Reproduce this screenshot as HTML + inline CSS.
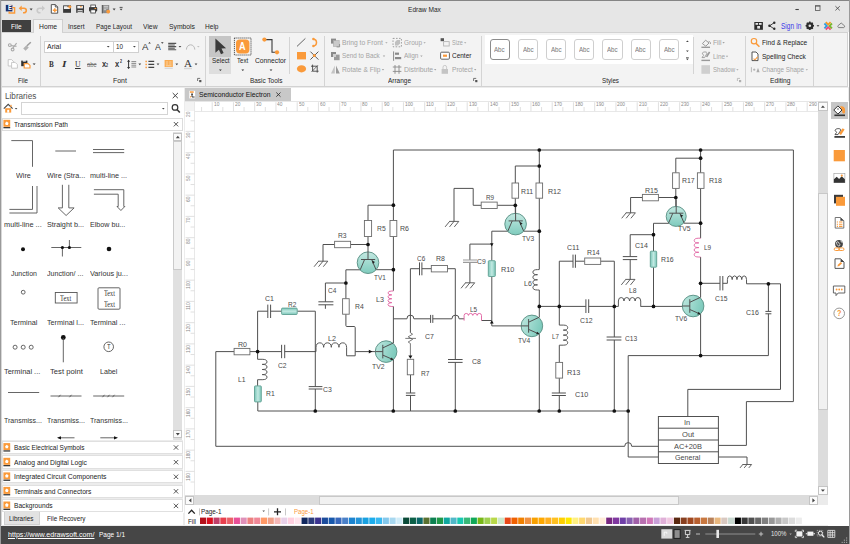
<!DOCTYPE html>
<html lang="en">
<head>
<meta charset="utf-8">
<title>Edraw Max</title>
<style>
*{box-sizing:border-box;margin:0;padding:0}
html,body{width:850px;height:544px;overflow:hidden;background:#fff}
body{font-family:"Liberation Sans",sans-serif;font-size:8px;color:#262626;position:relative}
#win{position:absolute;left:0;top:0;width:850px;height:544px;overflow:hidden;background:#e6e6e6}
.b{position:absolute}
.t{position:absolute;white-space:nowrap;transform-origin:0 50%}
svg.l{position:absolute;left:0;top:0;width:850px;height:544px;overflow:hidden}
.edge{position:absolute;background:#9a9a9a}
</style>
</head>
<body>
<div id="win">
<!-- panel backgrounds -->
<div class="b" style="left:0px;top:87px;width:850px;height:457px;background:#ececec;"></div>
<div class="b" style="left:2px;top:88px;width:182px;height:424.5px;background:#fff;"></div>
<div class="b" style="left:20.7px;top:102px;width:147.8px;height:12.7px;background:#fff;border:1px solid #d4d4d4;"></div>
<div class="b" style="left:2px;top:117.8px;width:180.5px;height:13px;background:#fff;border:1px solid #dcdcdc;"></div>
<div class="b" style="left:173.2px;top:132.4px;width:9.2px;height:308px;background:#e0e0e0;"></div>
<div class="b" style="left:173.2px;top:132.6px;width:9.2px;height:8.6px;background:#fbfbfb;border:1px solid #c4c4c4;"></div>
<div class="b" style="left:173.2px;top:141.2px;width:9.2px;height:129.2px;background:#f2f2f2;border:1px solid #cacaca;"></div>
<div class="b" style="left:173.2px;top:430px;width:9.2px;height:8.4px;background:#fbfbfb;border:1px solid #c4c4c4;"></div>
<div class="b" style="left:2px;top:440.4px;width:181px;height:72px;background:#ececec;"></div>
<div class="b" style="left:2px;top:440.7px;width:180.5px;height:13.4px;background:#fff;border:1px solid #e0e0e0;"></div>
<div class="b" style="left:2px;top:455.4px;width:180.5px;height:13.4px;background:#fff;border:1px solid #e0e0e0;"></div>
<div class="b" style="left:2px;top:470.0px;width:180.5px;height:13.4px;background:#fff;border:1px solid #e0e0e0;"></div>
<div class="b" style="left:2px;top:484.5px;width:180.5px;height:13.4px;background:#fff;border:1px solid #e0e0e0;"></div>
<div class="b" style="left:2px;top:499.1px;width:180.5px;height:13.4px;background:#fff;border:1px solid #e0e0e0;"></div>
<div class="b" style="left:2px;top:512.4px;width:181px;height:13px;background:#fff;"></div>
<div class="b" style="left:3.5px;top:512.4px;width:36.8px;height:12.4px;background:#e2e2e2;border:1px solid #d0d0d0;border-top:none;"></div>
<div class="b" style="left:185.2px;top:88px;width:663px;height:13.2px;background:#fff;"></div>
<div class="b" style="left:185.2px;top:88.2px;width:105.4px;height:12.8px;background:#c8c8c8;"></div>
<div class="b" style="left:185.2px;top:101px;width:633px;height:393.8px;background:#fff;"></div>
<div class="b" style="left:185.2px;top:101px;width:633px;height:11px;background:#fff;border-bottom:1px solid #e8e8e8;"></div>
<div class="b" style="left:185.2px;top:101px;width:9.7px;height:393.8px;background:#fff;border-right:1px solid #e8e8e8;"></div>
<div class="b" style="left:185.2px;top:101px;width:9px;height:10px;background:#f3f3f3;"></div>
<div class="b" style="left:185.2px;top:101px;width:633px;height:1px;background:#e6e6e6;"></div>
<div class="b" style="left:818.2px;top:101.4px;width:9.4px;height:393.4px;background:#dcdcdc;"></div>
<div class="b" style="left:818.2px;top:101.6px;width:9.4px;height:9.8px;background:#fbfbfb;border:1px solid #c4c4c4;"></div>
<div class="b" style="left:818.2px;top:193px;width:9.4px;height:217px;background:#f1f1f1;border:1px solid #c8c8c8;"></div>
<div class="b" style="left:818.2px;top:486.2px;width:9.4px;height:8.6px;background:#fbfbfb;border:1px solid #c4c4c4;"></div>
<div class="b" style="left:185.2px;top:495.4px;width:642.4px;height:9.6px;background:#dcdcdc;"></div>
<div class="b" style="left:185.4px;top:495.8px;width:9px;height:9px;background:#fbfbfb;border:1px solid #c4c4c4;"></div>
<div class="b" style="left:319.2px;top:495.8px;width:360.2px;height:9px;background:#f1f1f1;border:1px solid #c8c8c8;"></div>
<div class="b" style="left:809.3px;top:495.8px;width:8.6px;height:9px;background:#fbfbfb;border:1px solid #c4c4c4;"></div>
<div class="b" style="left:818.4px;top:495.4px;width:9.2px;height:9.6px;background:#ebebeb;"></div>
<div class="b" style="left:185.2px;top:505.2px;width:642.6px;height:20.2px;background:#fff;"></div>
<div class="b" style="left:828px;top:101px;width:21px;height:424.5px;background:#fff;"></div>
<div class="b" style="left:831px;top:101.8px;width:16.5px;height:16.8px;background:#c6c6c6;"></div>
<div class="b" style="left:0px;top:525.5px;width:850px;height:18.5px;background:#464646;"></div>
<!-- title + ribbon backgrounds -->
<div class="b" style="left:0px;top:0px;width:850px;height:33px;background:#e6e6e6;"></div>
<div class="b" style="left:2px;top:19.6px;width:29px;height:13px;background:#404040;"></div>
<div class="b" style="left:32.5px;top:19px;width:30.5px;height:15px;background:#f3f3f3;border:1px solid #cfcfcf;border-bottom:none;"></div>
<div class="b" style="left:1px;top:32px;width:846.5px;height:55px;background:#f3f3f3;border:1px solid #d2d2d2;border-left:none;"></div>
<div class="b" style="left:33.5px;top:32px;width:28.5px;height:1px;background:#f3f3f3;"></div>
<div class="b" style="left:847.5px;top:32px;width:2.5px;height:55px;background:#fff;"></div>
<div class="b" style="left:39.9px;top:36px;width:1px;height:50px;background:#d4d4d4;"></div>
<div class="b" style="left:205.1px;top:36px;width:1px;height:50px;background:#d4d4d4;"></div>
<div class="b" style="left:323.9px;top:36px;width:1px;height:50px;background:#d4d4d4;"></div>
<div class="b" style="left:481.2px;top:36px;width:1px;height:50px;background:#d4d4d4;"></div>
<div class="b" style="left:744.5px;top:36px;width:1px;height:50px;background:#d4d4d4;"></div>
<div class="b" style="left:813.2px;top:36px;width:1px;height:50px;background:#d4d4d4;"></div>
<div class="b" style="left:288.7px;top:37px;width:1px;height:37px;background:#d4d4d4;"></div>
<div class="b" style="left:693.3px;top:37px;width:1px;height:37px;background:#d4d4d4;"></div>
<div class="b" style="left:44.2px;top:40.5px;width:70px;height:12.2px;background:#fff;border:1px solid #d0d0d0;"></div>
<div class="b" style="left:113.2px;top:40.5px;width:25.8px;height:12.2px;background:#fff;border:1px solid #d0d0d0;"></div>
<div class="b" style="left:209.3px;top:35.6px;width:22px;height:21.2px;background:#c6c6c6;"></div>
<div class="b" style="left:209.3px;top:56.8px;width:22px;height:17px;background:#dedede;"></div>
<div class="b" style="left:485.2px;top:35px;width:208px;height:28.8px;background:#fff;"></div>
<div class="b" style="left:489.5px;top:39.2px;width:20.4px;height:20.5px;background:#fff;border:1px solid #8c8c8c;border-radius:3px;"></div>
<div class="b" style="left:517.7px;top:39.2px;width:20.4px;height:20.5px;background:#fff;border:1px solid #cfcfcf;border-radius:3px;"></div>
<div class="b" style="left:545.9px;top:39.2px;width:20.4px;height:20.5px;background:#fff;border:1px solid #cfcfcf;border-radius:3px;"></div>
<div class="b" style="left:574.1px;top:39.2px;width:20.4px;height:20.5px;background:#fff;border:1px solid #cfcfcf;border-radius:3px;"></div>
<div class="b" style="left:602.3px;top:39.2px;width:20.4px;height:20.5px;background:#fff;border:1px solid #cfcfcf;border-radius:3px;"></div>
<div class="b" style="left:630.5px;top:39.2px;width:20.4px;height:20.5px;background:#fff;border:1px solid #cfcfcf;border-radius:3px;"></div>
<div class="b" style="left:658.7px;top:39.2px;width:20.4px;height:20.5px;background:#fff;border:1px solid #cfcfcf;border-radius:3px;"></div>
<!-- circuit drawing -->
<svg class="l" viewBox="0 0 850 544"><defs><linearGradient id="tealv" x1="0" y1="0" x2="0" y2="1"><stop offset="0" stop-color="#c4e9e2"/><stop offset="1" stop-color="#7fcbbd"/></linearGradient><linearGradient id="tealh" x1="0" y1="0" x2="1" y2="0.3"><stop offset="0" stop-color="#c0e8e0"/><stop offset="1" stop-color="#7fcbbd"/></linearGradient><linearGradient id="tealrv" x1="0" y1="0" x2="1" y2="0"><stop offset="0" stop-color="#7ac6b8"/><stop offset="0.5" stop-color="#c2e9e2"/><stop offset="1" stop-color="#7ac6b8"/></linearGradient><linearGradient id="tealrh" x1="0" y1="0" x2="0" y2="1"><stop offset="0" stop-color="#7ac6b8"/><stop offset="0.5" stop-color="#c2e9e2"/><stop offset="1" stop-color="#7ac6b8"/></linearGradient></defs>
<path d="M215.8 351.6V446.3H624.7a3.5 3.7 0 0 1 7 0H658.4M215.8 351.6H234.1M249.9 351.6H281.6M284.7 351.6H316M281.6 344.8V358.2M284.7 344.8V358.2M257.6 351.6V311.2H267.8M270.6 311.2H281.6M297.2 311.2H315.3V386.6M315.3 389V411M267.8 304.6V318M270.6 304.6V318M308.7 386.6H322.4M308.7 389H322.4M257.6 351.6V359.3M257.6 379.7V385.9M257.8 401.9V411H628.2M346.6 355.8H355.2V327.5q0 -1 -1 -1H346.9q-1 0 -1 -1V314.2M345.9 298.7V269.8H360.2M355.2 351.6H382.8M345.9 283H325.4V301.8M318.4 301.8H333.4M318.4 304.8H333.4M325.4 304.8V308.8M376.1 269.7H393.4M368 244.5V236.5M368 220.5V205.2H393.4M350.6 244.5H368M334.6 244.5H323V261.2M393.4 150V220.5M393.4 236.5V290.8M393.4 306.4V343M393.4 359.8V411M393.4 150H793.4V401.6H746.4V445.4H718.4M393.4 318.8H406.9a3.5 3.7 0 0 1 7 0H430.6M432.8 318.8H451.9a3.6 3.7 0 0 1 7.2 0H464.1M430.6 314.9V322.9M432.8 314.9V322.9M481.5 320.5H491.8M410.4 268.7V332.7M410.5 374.8V393M405.9 393H415.3M405.9 395.4H415.3M410.5 395.4V411M410.4 268.7H419.5M421.9 268.7H431.3M447.5 268.7H455.3V359.5M455.3 362.4V411M419.5 262.4V275.3M421.9 262.4V275.3M448 359.5H462.6M448 362.4H462.6M507.8 231.2H491.8V260.7M491.8 276.5V325.9H528.5M491.8 244.1H469.9V260M469.9 262.8V282.8M515.3 205.3H497.2M481.2 205.3H473.2V188.4H454V221.4M539.3 166H515.3V183M515.3 198.2V213.5M523.7 231.2H539.3M539.3 150V183M539.3 198.2V269.4M539.3 290V317.3M539.3 334.2V411M539.3 306.4H585.9M588.7 306.4H618.4M640.5 306.4H689.7M585.9 299.3V313M588.7 299.3V313M559.3 306.4V261.2H573M575.4 261.2H584.7M600.7 261.2H614.3V337M614.3 340V411M573 254.6V267.8M575.4 254.6V267.8M606.6 337H621.4M606.6 340H621.4M559.3 306.4V325.1M559.3 345.2V362.4M559.3 378.1V393M559.3 395.5V411M551.8 393H565.9M551.8 395.5H565.9M668.6 223.3H653.5V251.2M653.5 267.2V306.4M653.5 234.7H630.2V256.6M622.8 256.6H637.2M622.8 259.6H637.2M630.2 259.6V279.4M675.8 197.5H658.4M642.4 197.5H630.6V212.8M700.6 158.2H675.8V172.8M675.8 188.4V206M684.3 223.2H700.6M700.6 150V172.8M700.6 188.4V238.2M700.6 257V297.4M700.6 314.2V355.6M700.6 283.3H720M722.8 283.3H727.4M746.5 283.8H780.5V389.4H687.8V416.5M720 276V290.4M722.8 276V290.4M768.4 283.8V311.4M765.4 311.4H771.4M765.4 313.8H771.4M768.4 313.8V355.6H628.2V457H658.4M718.4 457H747V464.5" stroke="#505050" stroke-width="1" fill="none" stroke-linejoin="round"/>
<path d="M410.4 332.7l2.2 1.5l-4.4 2.6l4.4 2.6l-4.4 2.6l2.2 1.5V356M405.3 338.4H416" stroke="#505050" stroke-width="0.75" fill="none" stroke-linejoin="round"/>
<path d="M463 260H477.4M463 262.4H477.4" stroke="#9a9a9a" stroke-width="1.1" fill="none" stroke-linejoin="round"/>
<rect x="234.1" y="348.4" width="15.8" height="6.4" fill="#fff" stroke="#6a6a6a" stroke-width="0.9"/>
<rect x="281.6" y="308.1" width="15.6" height="6.4" rx="0.8" fill="url(#tealrh)" stroke="#5f9f92" stroke-width="0.9"/>
<rect x="254.5" y="385.9" width="6.8" height="16.0" rx="0.8" fill="url(#tealrv)" stroke="#5f9f92" stroke-width="0.9"/>
<rect x="342.6" y="298.7" width="6.6" height="15.5" fill="#fff" stroke="#6a6a6a" stroke-width="0.9"/>
<rect x="334.6" y="241.3" width="16.0" height="6.4" fill="#fff" stroke="#6a6a6a" stroke-width="0.9"/>
<rect x="364.4" y="220.5" width="7.2" height="16.0" fill="#fff" stroke="#6a6a6a" stroke-width="0.9"/>
<rect x="390" y="220.5" width="6.8" height="16.0" fill="#fff" stroke="#6a6a6a" stroke-width="0.9"/>
<rect x="431.3" y="265.5" width="16.2" height="6.4" fill="#fff" stroke="#6a6a6a" stroke-width="0.9"/>
<rect x="407.3" y="359.3" width="6.4" height="15.5" fill="#fff" stroke="#6a6a6a" stroke-width="0.9"/>
<rect x="488.3" y="260.7" width="7.0" height="15.8" rx="0.8" fill="url(#tealrv)" stroke="#5f9f92" stroke-width="0.9"/>
<rect x="481.2" y="202.1" width="16.0" height="6.4" fill="#fff" stroke="#6a6a6a" stroke-width="0.9"/>
<rect x="512" y="183" width="6.6" height="15.2" fill="#fff" stroke="#6a6a6a" stroke-width="0.9"/>
<rect x="536" y="183" width="6.6" height="15.2" fill="#fff" stroke="#6a6a6a" stroke-width="0.9"/>
<rect x="584.7" y="258" width="16.0" height="6.4" fill="#fff" stroke="#6a6a6a" stroke-width="0.9"/>
<rect x="555.8" y="362.4" width="6.8" height="15.7" fill="#fff" stroke="#6a6a6a" stroke-width="0.9"/>
<rect x="650.3" y="251.2" width="6.4" height="16.0" rx="0.8" fill="url(#tealrv)" stroke="#5f9f92" stroke-width="0.9"/>
<rect x="642.4" y="194.4" width="16.0" height="6.4" fill="#fff" stroke="#6a6a6a" stroke-width="0.9"/>
<rect x="672.6" y="172.8" width="6.6" height="15.6" fill="#fff" stroke="#6a6a6a" stroke-width="0.9"/>
<rect x="697.4" y="172.8" width="6.6" height="15.6" fill="#fff" stroke="#6a6a6a" stroke-width="0.9"/>
<path d="M257.6 359.3H262.20000000000005a4.80 2.55 0 0 1 0 5.10a4.80 2.55 0 0 1 0 5.10a4.80 2.55 0 0 1 0 5.10a4.80 2.55 0 0 1 0 5.10H257.6" stroke="#505050" stroke-width="0.95" fill="none" stroke-linejoin="round"/>
<path d="M316 351.6V347.3a3.83 4.70 0 0 1 7.65 0a3.83 4.70 0 0 1 7.65 0a3.83 4.70 0 0 1 7.65 0a3.83 4.70 0 0 1 7.65 0V355.8" stroke="#505050" stroke-width="0.95" fill="none" stroke-linejoin="round"/>
<path d="M393.4 291H391.79999999999995a3.80 1.94 0 0 0 0 3.88a3.80 1.94 0 0 0 0 3.88a3.80 1.94 0 0 0 0 3.88a3.80 1.94 0 0 0 0 3.88H393.4" stroke="#e266a4" stroke-width="0.95" fill="none" stroke-linejoin="round"/>
<path d="M464.1 320.6V315.4a2.18 2.1 0 0 1 4.35 0a2.18 2.1 0 0 1 4.35 0a2.18 2.1 0 0 1 4.35 0a2.18 2.1 0 0 1 4.35 0V320.6" stroke="#e266a4" stroke-width="0.95" fill="none" stroke-linejoin="round"/>
<path d="M539.3 269.6H537.5a4.60 2.55 0 0 0 0 5.10a4.60 2.55 0 0 0 0 5.10a4.60 2.55 0 0 0 0 5.10a4.60 2.55 0 0 0 0 5.10H539.3" stroke="#505050" stroke-width="0.95" fill="none" stroke-linejoin="round"/>
<path d="M559.3 325.1H563.3a4.40 2.51 0 0 1 0 5.02a4.40 2.51 0 0 1 0 5.02a4.40 2.51 0 0 1 0 5.02a4.40 2.51 0 0 1 0 5.02H559.3" stroke="#505050" stroke-width="0.95" fill="none" stroke-linejoin="round"/>
<path d="M618.4 306.4V301a2.79 3.50 0 0 1 5.58 0a2.79 3.50 0 0 1 5.58 0a2.79 3.50 0 0 1 5.58 0a2.79 3.50 0 0 1 5.58 0V306.4" stroke="#505050" stroke-width="0.95" fill="none" stroke-linejoin="round"/>
<path d="M700.6 238.2H698.8000000000001a4.60 2.35 0 0 0 0 4.70a4.60 2.35 0 0 0 0 4.70a4.60 2.35 0 0 0 0 4.70a4.60 2.35 0 0 0 0 4.70H700.6" stroke="#e266a4" stroke-width="0.95" fill="none" stroke-linejoin="round"/>
<path d="M727.4 283.3V279.6a2.39 3.70 0 0 1 4.78 0a2.39 3.70 0 0 1 4.78 0a2.39 3.70 0 0 1 4.78 0a2.39 3.70 0 0 1 4.78 0V283.8" stroke="#505050" stroke-width="0.95" fill="none" stroke-linejoin="round"/>
<path d="M318.2 261.2H327.8M318.6 261.2l-4.5 5.5M323.0 261.2l-4.5 5.5M327.8 261.2l-4.5 5.5" stroke="#505050" stroke-width="0.9" fill="none"/>
<path d="M449.2 221.4H458.8M449.6 221.4l-4.5 5.5M454.0 221.4l-4.5 5.5M458.8 221.4l-4.5 5.5" stroke="#505050" stroke-width="0.9" fill="none"/>
<path d="M465.09999999999997 282.8H474.7M465.5 282.8l-4.5 5.5M469.9 282.8l-4.5 5.5M474.7 282.8l-4.5 5.5" stroke="#505050" stroke-width="0.9" fill="none"/>
<path d="M625.8000000000001 212.8H635.4M626.2 212.8l-4.5 5.5M630.6 212.8l-4.5 5.5M635.4 212.8l-4.5 5.5" stroke="#505050" stroke-width="0.9" fill="none"/>
<path d="M625.4000000000001 279.4H635.0M625.8 279.4l-4.5 5.5M630.2 279.4l-4.5 5.5M635.0 279.4l-4.5 5.5" stroke="#505050" stroke-width="0.9" fill="none"/>
<path d="M742.4 464.5H751.6M742.8 464.5l-2.8 3.4M747.0 464.5l-2.8 3.4M751.6 464.5l-2.8 3.4" stroke="#505050" stroke-width="0.9" fill="none"/>
<path d="M372.4 351.6l-3.6 -1.9v3.8z" fill="#111"/>
<path d="M410.4 358.8l-2 -3.2h4z" fill="#111"/>
<path d="M491.8 320.6l-1.9 2.8h3.8z" fill="#111"/>
<path d="M491.8 246.4l-1.7 -3.2h3.4z" fill="#111"/>
<circle cx="368" cy="262.7" r="10.8" fill="url(#tealv)" stroke="#62978c" stroke-width="1"/><path d="M368 244.89999999999998V259.5M361 259.5H375.2M364.6 259.5L360.2 269.8M371.6 259.5L376.1 269.8" stroke="#505050" stroke-width="1" fill="none" stroke-linejoin="round"/><path d="M372.1 260.5l2.9 1.4l-2.2 1.9z" fill="#222"/>
<circle cx="515.6" cy="224.1" r="10.8" fill="url(#tealv)" stroke="#62978c" stroke-width="1"/><path d="M515.6 206.29999999999998V220.9M508.6 220.9H522.8000000000001M512.2 220.9L507.8 231.2M519.2 220.9L523.7 231.2" stroke="#505050" stroke-width="1" fill="none" stroke-linejoin="round"/><path d="M519.7 221.9l2.9 1.4l-2.2 1.9z" fill="#222"/>
<circle cx="676.2" cy="216.4" r="10" fill="url(#tealv)" stroke="#62978c" stroke-width="1"/><path d="M676.2 199.4V213.20000000000002M669.2 213.20000000000002H683.4000000000001M672.8000000000001 213.20000000000002L668.4000000000001 223.5M679.8000000000001 213.20000000000002L684.3000000000001 223.5" stroke="#505050" stroke-width="1" fill="none" stroke-linejoin="round"/><path d="M680.3000000000001 214.20000000000002l2.9 1.4l-2.2 1.9z" fill="#222"/>
<circle cx="386.1" cy="351.6" r="10.8" fill="url(#tealh)" stroke="#62978c" stroke-width="1"/><path d="M375.3 351.6H382.8M382.8 344.8V358.40000000000003M382.8 347.90000000000003L393.5 342.90000000000003M382.8 355.1L393.5 359.8" stroke="#505050" stroke-width="1" fill="none" stroke-linejoin="round"/><path d="M393.5 359.8l-3.3 0.2l1.4 -2.6z" fill="#222"/>
<circle cx="531.9" cy="325.9" r="10.8" fill="url(#tealh)" stroke="#62978c" stroke-width="1"/><path d="M521.1 325.9H528.6M528.6 319.09999999999997V332.7M528.6 322.2L539.3 317.2M528.6 329.4L539.3 334.09999999999997" stroke="#505050" stroke-width="1" fill="none" stroke-linejoin="round"/><path d="M539.3 334.09999999999997l-3.3 0.2l1.4 -2.6z" fill="#222"/>
<circle cx="693.1" cy="306" r="10.8" fill="url(#tealh)" stroke="#62978c" stroke-width="1"/><path d="M682.3000000000001 306H689.8000000000001M689.8000000000001 299.2V312.8M689.8000000000001 302.3L700.5 297.3M689.8000000000001 309.5L700.5 314.2" stroke="#505050" stroke-width="1" fill="none" stroke-linejoin="round"/><path d="M700.5 314.2l-3.3 0.2l1.4 -2.6z" fill="#222"/>
<circle cx="257.6" cy="351.6" r="1.85" fill="#111"/>
<circle cx="315.3" cy="411" r="1.85" fill="#111"/>
<circle cx="393.3" cy="411" r="1.85" fill="#111"/>
<circle cx="455.3" cy="411" r="1.85" fill="#111"/>
<circle cx="539.2" cy="411" r="1.85" fill="#111"/>
<circle cx="559.3" cy="411" r="1.85" fill="#111"/>
<circle cx="614.3" cy="411" r="1.85" fill="#111"/>
<circle cx="628.2" cy="411" r="1.85" fill="#111"/>
<circle cx="345.9" cy="283" r="1.85" fill="#111"/>
<circle cx="368" cy="244.5" r="1.85" fill="#111"/>
<circle cx="393.4" cy="205.2" r="1.85" fill="#111"/>
<circle cx="393.4" cy="269.7" r="1.85" fill="#111"/>
<circle cx="539.3" cy="150" r="1.85" fill="#111"/>
<circle cx="539.3" cy="166" r="1.85" fill="#111"/>
<circle cx="515.3" cy="205.3" r="1.85" fill="#111"/>
<circle cx="539.3" cy="231.2" r="1.85" fill="#111"/>
<circle cx="539.3" cy="306.4" r="1.85" fill="#111"/>
<circle cx="559.3" cy="306.4" r="1.85" fill="#111"/>
<circle cx="614.3" cy="306.4" r="1.85" fill="#111"/>
<circle cx="653.5" cy="306.4" r="1.85" fill="#111"/>
<circle cx="653.5" cy="234.7" r="1.85" fill="#111"/>
<circle cx="675.8" cy="197.5" r="1.85" fill="#111"/>
<circle cx="700.6" cy="150" r="1.85" fill="#111"/>
<circle cx="700.6" cy="158.2" r="1.85" fill="#111"/>
<circle cx="700.6" cy="223.2" r="1.85" fill="#111"/>
<circle cx="700.6" cy="283.3" r="1.85" fill="#111"/>
<circle cx="768.4" cy="283.8" r="1.85" fill="#111"/>
<circle cx="700.6" cy="355.6" r="1.85" fill="#111"/>
<rect x="658.4" y="416.5" width="60" height="47" fill="#fff" stroke="#505050" stroke-width="1"/>
<path d="M658.4 428.2H718.4M658.4 440H718.4M658.4 451.8H718.4" stroke="#505050" stroke-width="1" fill="none" stroke-linejoin="round"/></svg>
<!-- icons -->
<svg class="l" viewBox="0 0 850 544"><path d="M172.70000000000002 93.0l5.2 5.2M177.9 93.0l-5.2 5.2" stroke="#444" stroke-width="1"/>
<path d="M3.8 108.6l4.4-4.2 4.4 4.2" stroke="#4a4a4a" stroke-width="1.200" fill="none"/><path d="M5.2 108.2h6v4.4h-6z" fill="#fa9a3a"/><rect x="7.2" y="109.8" width="2" height="2.8" fill="#fff"/><rect x="10.4" y="104.8" width="1.2" height="2.2" fill="#fa9a3a"/>
<path d="M14.8 108h2.6l-1.3 1.5z" fill="#444"/>
<path d="M162 108h2.6l-1.3 1.5z" fill="#444"/>
<circle cx="175" cy="107.4" r="2.8" fill="none" stroke="#333" stroke-width="1.2"/><path d="M177 109.6l2.8 3" stroke="#333" stroke-width="1.5"/>
<rect x="3.4" y="119.8" width="6.8" height="7" fill="#fa9a3a"/><path d="M6.8 121.39999999999999l1.7 1.5-.6 2.1h-2.2l-.6-2.1z" fill="#fff"/><rect x="3.4" y="127.0" width="6.8" height="1.3" fill="#3a3a3a"/>
<path d="M173.8 122.0l4.4 4.4M178.2 122.0l-4.4 4.4" stroke="#444" stroke-width="0.9"/>
<path d="M175.8 138.2l2-2.4 2 2.4z" fill="#444"/>
<path d="M175.8 433l2 2.4 2-2.4z" fill="#444"/>
<g><path d="M11.300 140.600h21.200v26.200" stroke="#555" stroke-width="0.9" fill="none"/><path d="M55.3 151h20.7" stroke="#555" stroke-width="0.9" fill="none"/><path d="M93 149.5h31.2M93 152.6h31.2" stroke="#555" stroke-width="0.9" fill="none"/><path d="M9.4 209.4h23.1v-23.4M9.4 213h27.6v-27" stroke="#555" stroke-width="0.9" fill="none"/><path d="M62.400 184.800v23.100h-4.200l7.900 7.600 8-7.600h-5.300v-23.100" stroke="#555" stroke-width="0.9" fill="none"/><path d="M93.900 189.700H123.800V206.500h1l-3.900 4-3.900-4h1.200V194.200H93.900" stroke="#555" stroke-width="0.9" fill="none"/><circle cx="23" cy="249.2" r="2" fill="#111"/><path d="M51.3 247.5h30M62.4 247.5v9M69.4 247.5v-7.5" stroke="#555" stroke-width="0.9" fill="none"/><circle cx="62.4" cy="247.5" r="1.6" fill="#111"/><circle cx="69.4" cy="247.5" r="1.6" fill="#111"/><circle cx="109" cy="249" r="2.3" fill="#111"/><circle cx="23.2" cy="292.2" r="1.9" stroke="#555" stroke-width="0.9" fill="none"/><rect x="55.3" y="292.5" width="21.8" height="10.5" stroke="#555" stroke-width="0.9" fill="none"/><rect x="98" y="287.8" width="22" height="21.4" rx="1" stroke="#555" stroke-width="0.9" fill="none"/><circle cx="15.1" cy="347.2" r="2" stroke="#555" stroke-width="0.9" fill="none"/><circle cx="23.2" cy="347.2" r="2" stroke="#555" stroke-width="0.9" fill="none"/><circle cx="31.2" cy="347.2" r="2" stroke="#555" stroke-width="0.9" fill="none"/><circle cx="63.3" cy="337.5" r="2.4" fill="#111"/><path d="M63.3 338v24.3" stroke="#555" stroke-width="0.9" fill="none"/><circle cx="108.7" cy="346.8" r="4.8" stroke="#555" stroke-width="0.9" fill="none"/><path d="M8 392.5h31.2" stroke="#555" stroke-width="0.9" fill="none"/><path d="M50.5 396h31M58.5 397.2l2-2.4M69.5 397.2l2-2.4" stroke="#555" stroke-width="0.9" fill="none"/><path d="M93.2 396h31M102.5 397.2l2-2.4M107.5 397.2l2-2.4M112.5 397.2l2-2.4" stroke="#555" stroke-width="0.9" fill="none"/><path d="M58.5 437.8h16" stroke="#555" stroke-width="0.9" fill="none"/><path d="M57 437.8l4-1.6v3.2z" fill="#111"/><path d="M100.3 437.8h16" stroke="#555" stroke-width="0.9" fill="none"/><path d="M118 437.8l-4-1.6v3.2z" fill="#111"/></g>
<rect x="3.4" y="443.1" width="6.8" height="7" fill="#fa9a3a"/><path d="M6.8 444.70000000000005l1.7 1.5-.6 2.1h-2.2l-.6-2.1z" fill="#fff"/><rect x="3.4" y="450.3" width="6.8" height="1.3" fill="#3a3a3a"/>
<path d="M173.8 445.3l4.4 4.4M178.2 445.3l-4.4 4.4" stroke="#444" stroke-width="0.9"/>
<rect x="3.4" y="457.8" width="6.8" height="7" fill="#fa9a3a"/><path d="M6.8 459.40000000000003l1.7 1.5-.6 2.1h-2.2l-.6-2.1z" fill="#fff"/><rect x="3.4" y="465.0" width="6.8" height="1.3" fill="#3a3a3a"/>
<path d="M173.8 460.0l4.4 4.4M178.2 460.0l-4.4 4.4" stroke="#444" stroke-width="0.9"/>
<rect x="3.4" y="472.4" width="6.8" height="7" fill="#fa9a3a"/><path d="M6.8 474.0l1.7 1.5-.6 2.1h-2.2l-.6-2.1z" fill="#fff"/><rect x="3.4" y="479.59999999999997" width="6.8" height="1.3" fill="#3a3a3a"/>
<path d="M173.8 474.6l4.4 4.4M178.2 474.6l-4.4 4.4" stroke="#444" stroke-width="0.9"/>
<rect x="3.4" y="486.9" width="6.8" height="7" fill="#fa9a3a"/><path d="M6.8 488.5l1.7 1.5-.6 2.1h-2.2l-.6-2.1z" fill="#fff"/><rect x="3.4" y="494.09999999999997" width="6.8" height="1.3" fill="#3a3a3a"/>
<path d="M173.8 489.1l4.4 4.4M178.2 489.1l-4.4 4.4" stroke="#444" stroke-width="0.9"/>
<rect x="3.4" y="501.5" width="6.8" height="7" fill="#fa9a3a"/><path d="M6.8 503.1l1.7 1.5-.6 2.1h-2.2l-.6-2.1z" fill="#fff"/><rect x="3.4" y="508.7" width="6.8" height="1.3" fill="#3a3a3a"/>
<path d="M173.8 503.7l4.4 4.4M178.2 503.7l-4.4 4.4" stroke="#444" stroke-width="0.9"/>
<rect x="189.300" y="90.800" width="5.800" height="7.600" fill="#fff"/><rect x="189.900" y="91.300" width="3.800" height="1.500" fill="#fa9a3a"/><rect x="191.300" y="93.500" width="1.500" height="1.500" fill="#222"/><path d="M192 95v2h2.600" stroke="#222" stroke-width="0.9" fill="none"/><rect x="190" y="96.200" width="1.200" height="1.200" fill="#fa9a3a"/>
<path d="M276.29999999999995 92.5l4.2 4.2M280.5 92.5l-4.2 4.2" stroke="#333" stroke-width="0.9"/>
<path d="M201.57 107v4.2M212.20 102.2v9M222.82 107v4.2M233.45 102.2v9M244.07 107v4.2M254.70 102.2v9M265.32 107v4.2M275.95 102.2v9M286.57 107v4.2M297.20 102.2v9M307.82 107v4.2M318.45 102.2v9M329.07 107v4.2M339.70 102.2v9M350.32 107v4.2M360.95 102.2v9M371.57 107v4.2M382.20 102.2v9M392.82 107v4.2M403.45 102.2v9M414.07 107v4.2M424.70 102.2v9M435.32 107v4.2M445.95 102.2v9M456.57 107v4.2M467.20 102.2v9M477.82 107v4.2M488.45 102.2v9M499.07 107v4.2M509.70 102.2v9M520.33 107v4.2M530.95 102.2v9M541.58 107v4.2M552.20 102.2v9M562.83 107v4.2M573.45 102.2v9M584.08 107v4.2M594.70 102.2v9M605.33 107v4.2M615.95 102.2v9M626.58 107v4.2M637.20 102.2v9M647.83 107v4.2M658.45 102.2v9M669.08 107v4.2M679.70 102.2v9M690.33 107v4.2M700.95 102.2v9M711.58 107v4.2M722.20 102.2v9M732.83 107v4.2M743.45 102.2v9M754.08 107v4.2M764.70 102.2v9M775.33 107v4.2M785.95 102.2v9M796.58 107v4.2M807.20 102.2v9M190.6 120.78h4M185.6 131.40h9M190.6 142.03h4M185.6 152.65h9M190.6 163.28h4M185.6 173.90h9M190.6 184.53h4M185.6 195.15h9M190.6 205.78h4M185.6 216.40h9M190.6 227.03h4M185.6 237.65h9M190.6 248.28h4M185.6 258.90h9M190.6 269.52h4M185.6 280.15h9M190.6 290.77h4M185.6 301.40h9M190.6 312.02h4M185.6 322.65h9M190.6 333.27h4M185.6 343.90h9M190.6 354.52h4M185.6 365.15h9M190.6 375.77h4M185.6 386.40h9M190.6 397.02h4M185.6 407.65h9M190.6 418.27h4M185.6 428.90h9M190.6 439.52h4M185.6 450.15h9M190.6 460.77h4M185.6 471.40h9M190.6 482.02h4" stroke="#dcdcdc" stroke-width="0.9" fill="none"/>
<path d="M820.9 107.8l2-2.4 2 2.4z" fill="#444"/>
<path d="M820.9 489.4l2 2.4 2-2.4z" fill="#444"/>
<path d="M191.4 498.2l-2.6 2.2 2.6 2.2z" fill="#444"/>
<path d="M812.4 498.2l2.6 2.2-2.6 2.2z" fill="#444"/>
<path d="M188.4 513.6l3.2-3.4 3.2 3.4" stroke="#222" stroke-width="1.3" fill="none"/>
<path d="M199.5 508.4v7M268.6 508.4v7M285.5 508.4v7" stroke="#bbb" stroke-width="0.8"/>
<path d="M262.4 510.6h2.6l-1.3 1.5z" fill="#555"/>
<path d="M274 511.8h7M277.5 508.3v7" stroke="#222" stroke-width="1.3"/>
<rect x="200.00" y="517.6" width="6.1" height="6.400" fill="#b5121b"/><rect x="206.77" y="517.6" width="6.1" height="6.400" fill="#d9101e"/><rect x="213.54" y="517.6" width="6.1" height="6.400" fill="#c0406a"/><rect x="220.31" y="517.6" width="6.1" height="6.400" fill="#e8404e"/><rect x="227.08" y="517.6" width="6.1" height="6.400" fill="#ea6068"/><rect x="233.85" y="517.6" width="6.1" height="6.400" fill="#e85098"/><rect x="240.62" y="517.6" width="6.1" height="6.400" fill="#df90b8"/><rect x="247.39" y="517.6" width="6.1" height="6.400" fill="#ec8080"/><rect x="254.16" y="517.6" width="6.1" height="6.400" fill="#f08898"/><rect x="260.93" y="517.6" width="6.1" height="6.400" fill="#ff9966"/><rect x="267.70" y="517.6" width="6.1" height="6.400" fill="#f0a088"/><rect x="274.47" y="517.6" width="6.1" height="6.400" fill="#f4b8b8"/><rect x="281.24" y="517.6" width="6.1" height="6.400" fill="#e8d0e8"/><rect x="288.01" y="517.6" width="6.1" height="6.400" fill="#ffd0e0"/><rect x="294.78" y="517.6" width="6.1" height="6.400" fill="#ffe4ec"/><rect x="301.55" y="517.6" width="6.1" height="6.400" fill="#12285e"/><rect x="308.32" y="517.6" width="6.1" height="6.400" fill="#2c3c7c"/><rect x="315.09" y="517.6" width="6.1" height="6.400" fill="#3c3490"/><rect x="321.86" y="517.6" width="6.1" height="6.400" fill="#1c4c9c"/><rect x="328.63" y="517.6" width="6.1" height="6.400" fill="#1858ac"/><rect x="335.40" y="517.6" width="6.1" height="6.400" fill="#3868bc"/><rect x="342.17" y="517.6" width="6.1" height="6.400" fill="#4a80c8"/><rect x="348.94" y="517.6" width="6.1" height="6.400" fill="#1c84d0"/><rect x="355.71" y="517.6" width="6.1" height="6.400" fill="#2494d8"/><rect x="362.48" y="517.6" width="6.1" height="6.400" fill="#18a0e0"/><rect x="369.25" y="517.6" width="6.1" height="6.400" fill="#1cacec"/><rect x="376.02" y="517.6" width="6.1" height="6.400" fill="#38b8f0"/><rect x="382.79" y="517.6" width="6.1" height="6.400" fill="#84c8ec"/><rect x="389.56" y="517.6" width="6.1" height="6.400" fill="#a8d8f0"/><rect x="396.33" y="517.6" width="6.1" height="6.400" fill="#d0ecf8"/><rect x="403.10" y="517.6" width="6.1" height="6.400" fill="#0a4a38"/><rect x="409.87" y="517.6" width="6.1" height="6.400" fill="#0c6048"/><rect x="416.64" y="517.6" width="6.1" height="6.400" fill="#0c6868"/><rect x="423.41" y="517.6" width="6.1" height="6.400" fill="#5a7030"/><rect x="430.18" y="517.6" width="6.1" height="6.400" fill="#0c8050"/><rect x="436.95" y="517.6" width="6.1" height="6.400" fill="#209848"/><rect x="443.72" y="517.6" width="6.1" height="6.400" fill="#10a8a0"/><rect x="450.49" y="517.6" width="6.1" height="6.400" fill="#50b8c8"/><rect x="457.26" y="517.6" width="6.1" height="6.400" fill="#18c8b0"/><rect x="464.03" y="517.6" width="6.1" height="6.400" fill="#38b878"/><rect x="470.80" y="517.6" width="6.1" height="6.400" fill="#10a858"/><rect x="477.57" y="517.6" width="6.1" height="6.400" fill="#78b818"/><rect x="484.34" y="517.6" width="6.1" height="6.400" fill="#a0d050"/><rect x="491.11" y="517.6" width="6.1" height="6.400" fill="#b8d848"/><rect x="497.88" y="517.6" width="6.1" height="6.400" fill="#cce8cc"/><rect x="504.65" y="517.6" width="6.1" height="6.400" fill="#e84818"/><rect x="511.42" y="517.6" width="6.1" height="6.400" fill="#f06000"/><rect x="518.19" y="517.6" width="6.1" height="6.400" fill="#f08000"/><rect x="524.96" y="517.6" width="6.1" height="6.400" fill="#f09040"/><rect x="531.73" y="517.6" width="6.1" height="6.400" fill="#f8a000"/><rect x="538.50" y="517.6" width="6.1" height="6.400" fill="#ffa800"/><rect x="545.27" y="517.6" width="6.1" height="6.400" fill="#ffb020"/><rect x="552.04" y="517.6" width="6.1" height="6.400" fill="#ffc020"/><rect x="558.81" y="517.6" width="6.1" height="6.400" fill="#ffd000"/><rect x="565.58" y="517.6" width="6.1" height="6.400" fill="#ffe800"/><rect x="572.35" y="517.6" width="6.1" height="6.400" fill="#fff080"/><rect x="579.12" y="517.6" width="6.1" height="6.400" fill="#ffd870"/><rect x="585.89" y="517.6" width="6.1" height="6.400" fill="#f0c890"/><rect x="592.66" y="517.6" width="6.1" height="6.400" fill="#ffe0b0"/><rect x="599.43" y="517.6" width="6.1" height="6.400" fill="#ffecd8"/><rect x="606.20" y="517.6" width="6.1" height="6.400" fill="#782880"/><rect x="612.97" y="517.6" width="6.1" height="6.400" fill="#8038a0"/><rect x="619.74" y="517.6" width="6.1" height="6.400" fill="#7040a8"/><rect x="626.51" y="517.6" width="6.1" height="6.400" fill="#8860b0"/><rect x="633.28" y="517.6" width="6.1" height="6.400" fill="#a060a8"/><rect x="640.05" y="517.6" width="6.1" height="6.400" fill="#b870b0"/><rect x="646.82" y="517.6" width="6.1" height="6.400" fill="#d078b8"/><rect x="653.59" y="517.6" width="6.1" height="6.400" fill="#c8a0d8"/><rect x="660.36" y="517.6" width="6.1" height="6.400" fill="#e0b0d8"/><rect x="667.13" y="517.6" width="6.1" height="6.400" fill="#f0c8e0"/><rect x="673.90" y="517.6" width="6.1" height="6.400" fill="#5a2810"/><rect x="680.67" y="517.6" width="6.1" height="6.400" fill="#884020"/><rect x="687.44" y="517.6" width="6.1" height="6.400" fill="#a04820"/><rect x="694.21" y="517.6" width="6.1" height="6.400" fill="#b86030"/><rect x="700.98" y="517.6" width="6.1" height="6.400" fill="#c87840"/><rect x="707.75" y="517.6" width="6.1" height="6.400" fill="#b88058"/><rect x="714.52" y="517.6" width="6.1" height="6.400" fill="#e8b880"/><rect x="721.29" y="517.6" width="6.1" height="6.400" fill="#d8c8c0"/><rect x="728.06" y="517.6" width="6.1" height="6.400" fill="#c8d8d0"/><rect x="734.83" y="517.6" width="6.1" height="6.400" fill="#000000"/><rect x="741.60" y="517.6" width="6.1" height="6.400" fill="#383838"/><rect x="748.37" y="517.6" width="6.1" height="6.400" fill="#505050"/><rect x="755.14" y="517.6" width="6.1" height="6.400" fill="#686868"/><rect x="761.91" y="517.6" width="6.1" height="6.400" fill="#808080"/><rect x="768.68" y="517.6" width="6.1" height="6.400" fill="#989898"/><rect x="775.45" y="517.6" width="6.1" height="6.400" fill="#b0b0b0"/><rect x="782.22" y="517.6" width="6.1" height="6.400" fill="#c8c8c8"/><rect x="788.99" y="517.6" width="6.1" height="6.400" fill="#dcdcdc"/><rect x="795.76" y="517.6" width="6.1" height="6.400" fill="#ececec"/>
<path d="M833.8 110l4.1-4.1 4.1 4.1-4.1 4.1z" fill="#fff" stroke="#333" stroke-width="1"/><circle cx="838" cy="109" r="0.8" fill="#555"/><path d="M840 106.600c2.800-1 5 .6 5 3v2.600c0 1.600-2.400 1.800-2.600 .2l-.4-2.800z" fill="#fa9a3a"/><path d="M834.4 115.3h10.6" stroke="#333" stroke-width="1.6"/>
<path d="M835 134.6l1.6-2.2-1.6-2.2c1-2 5.4-2.2 6-.2l-3 4.6z" fill="#fff" stroke="#444" stroke-width="0.9"/><path d="M843.6 128.9l-3.6 5.4" stroke="#fa9a3a" stroke-width="2.4"/><path d="M834.4 136.9h10.6" stroke="#333" stroke-width="1.7"/>
<rect x="833.7" y="150" width="11.2" height="11.3" fill="#fa9a3a"/>
<rect x="833.9" y="173.3" width="11" height="9.4" fill="#fff" stroke="#999" stroke-width="0.6"/><path d="M833.9 182.7v-3.4l2.8-2.6 2.4 2.2 2.6-2.6 3.2 3v3.4z" fill="#333"/><circle cx="841.8" cy="175.6" r="1.1" fill="#fa9a3a"/>
<rect x="834" y="194.8" width="9" height="8.6" fill="#3a3a3a"/><rect x="836" y="196.8" width="9" height="9" fill="#fa9a3a"/>
<path d="M835.2 217.5h5.2l3.4 3.2v7.4h-8.6z" fill="#fff" stroke="#666" stroke-width="0.9"/><path d="M840.4 217.5v3.2h3.4z" fill="#444"/><path d="M836.8 222h1.2M839 222h3.4M836.8 224.2h1.2M839 224.2h3.4M836.8 226.4h1.2M839 226.4h3.4" stroke="#fa9a3a" stroke-width="1.1"/>
<circle cx="839" cy="243.8" r="3.9" fill="#444"/><path d="M836.6 242.2c1-.8 2-.4 2.2.6s1.4 1.2 1 2.4-1.600 1-2 .2-1.400-1.200-1.200-3.200zM840.4 241c.8 0 1.600.8 1.600 1.800" stroke="#fff" stroke-width="0.8" fill="none"/><rect x="834.2" y="247.9" width="5.2" height="2.6" rx="1.3" fill="none" stroke="#fa9a3a" stroke-width="1"/><rect x="838.8" y="247.9" width="5.2" height="2.6" rx="1.3" fill="none" stroke="#fa9a3a" stroke-width="1"/>
<path d="M835 258.8h5.6l3.400 3.200v6.400h-9z" fill="#fff" stroke="#444" stroke-width="0.9"/><path d="M840.6 258.800v3.200h3.400z" fill="#444"/><path d="M837.4 266.600l.5-1.800 2.900-2.900 1.300 1.300-2.900 2.900z" fill="#fa9a3a"/>
<path d="M833.4 286h11.400v7h-6.600l-2.200 2.600v-2.600h-2.600z" fill="#fff" stroke="#555" stroke-width="0.9" stroke-linejoin="round"/><circle cx="836.6" cy="289.500" r="0.9" fill="#fa9a3a"/><circle cx="839.200" cy="289.500" r="0.9" fill="#fa9a3a"/><circle cx="841.800" cy="289.500" r="0.9" fill="#fa9a3a"/>
<circle cx="839.200" cy="313.400" r="5.300" fill="#fff" stroke="#8a8a8a" stroke-width="0.9"/>
<rect x="661.3" y="529.2" width="11" height="9.4" fill="#d8d8d8"/><path d="M664.2 535.8v-3.6h2.6v1.6" stroke="#fff" stroke-width="0.8" fill="none"/>
<rect x="674" y="529.6" width="6.2" height="8.8" fill="#8e8e8e" stroke="#1e1e1e" stroke-width="1"/>
<path d="M684.6 530.4h6M685.4 531v3.6h4.4v-3.6M687.6 534.6v2.4M685.8 537.4h3.6" stroke="#e8e8e8" stroke-width="0.9" fill="none"/>
<path d="M696 534h4" stroke="#ccc" stroke-width="0.9"/><path d="M705.3 534h50" stroke="#999" stroke-width="0.9"/><rect x="716.4" y="529.8" width="2.6" height="8.2" fill="#e8e8e8"/><path d="M758.8 534h4.4M761 531.8v4.4" stroke="#ccc" stroke-width="0.9"/>
<path d="M789.4 533.6h2.4l-1.2 1.4z" fill="#aaa"/>
<rect x="796.400" y="531.300" width="6" height="5.200" fill="#f2f2f2"/><path d="M795.300 532v-1.800h1.800M801.700 530.200h1.800v1.800M803.500 535.800v1.800h-1.800M797.100 537.600h-1.800v-1.800" stroke="#e8e8e8" stroke-width="0.8" fill="none"/>
<rect x="807.400" y="531.600" width="6" height="4.200" fill="#f2f2f2"/><path d="M805.800 533.700h1.600M813.400 533.700h1.600" stroke="#f0f0f0" stroke-width="1.100"/>
<rect x="817.200" y="530.400" width="5.600" height="5.600" fill="none" stroke="#bdbdbd" stroke-width="0.7" stroke-dasharray="1 0.8"/><circle cx="820.400" cy="533.200" r="2" fill="none" stroke="#f0f0f0" stroke-width="1"/><path d="M821.900 534.800l2.400 2.600" stroke="#f0f0f0" stroke-width="1.300"/>
<path d="M827.8 530.4h7v7h-7zM827.8 532.7h7M827.8 535h7M830.1 530.4v7M832.4 530.4v7" stroke="#e8e8e8" stroke-width="0.8" fill="none"/>
<g fill="#9a9a9a"><rect x="846" y="537.4" width="1.2" height="1.2"/><rect x="846" y="539.6" width="1.2" height="1.2"/><rect x="843.8" y="539.6" width="1.2" height="1.2"/><rect x="846" y="541.8" width="1.2" height="1.2"/><rect x="843.8" y="541.8" width="1.2" height="1.2"/><rect x="841.6" y="541.8" width="1.2" height="1.2"/></g><rect x="5.800" y="4.900" width="6.600" height="6.500" fill="#1b3272"/>
<path d="M12.4 7.6h2.2v5.4h-5.4v-1.6" stroke="#fa9a3a" stroke-width="1.4" fill="none"/>
<path d="M20 8.2h4a2.3 2.3 0 0 1 0 4.6h-1" stroke="#fa9a3a" stroke-width="1.6" fill="none"/><path d="M18.7 8.2l3-2.8v5.6z" fill="#fa9a3a"/>
<path d="M29.6 8.6h3l-1.5 1.8z" fill="#444"/>
<path d="M43.5 8.2h-4a2.3 2.3 0 0 0 0 4.6h1" stroke="#c9c9c9" stroke-width="1.6" fill="none"/><path d="M45 8.2l-3-2.8v5.6z" fill="#c9c9c9"/>
<path d="M51.3 4.6h4l2.4 2.4v6.2h-6.4z" fill="#fff" stroke="#444" stroke-width="0.9"/><path d="M55.3 4.6v2.4h2.4" fill="none" stroke="#444" stroke-width="0.8"/><path d="M52.8 10.3h4M54.8 8.3v4" stroke="#fa9a3a" stroke-width="1.4"/>
<rect x="63.1" y="5.400" width="7.900" height="7.400" fill="#3a3a3a"/><path d="M63.900 6.200h3.200l.8 .9h2.300v1.900h-6.300z" fill="#f2f2f2"/><path d="M67.800 6.800h2.600M69.300 5.300l1.500 1.500-1.500 1.500" stroke="#fa9a3a" stroke-width="1.200" fill="none"/>
<rect x="76.200" y="5.200" width="7.800" height="7.600" fill="#3a3a3a"/><rect x="77.300" y="6" width="5.600" height="2.400" fill="#f4f4f4"/><rect x="80" y="6.200" width="1.800" height="1" fill="#fa9a3a"/><rect x="77.600" y="10.200" width="5" height="2.600" fill="#f4f4f4"/><rect x="77.600" y="11.200" width="5" height="0.700" fill="#3a3a3a"/>
<rect x="89" y="7" width="8.2" height="4.4" rx="1" fill="#3a3a3a"/><rect x="90.8" y="5" width="4.6" height="2.4" fill="#fff" stroke="#3a3a3a" stroke-width="0.8"/><rect x="90.8" y="9.8" width="4.6" height="3.2" fill="#fff" stroke="#3a3a3a" stroke-width="0.8"/><rect x="94.6" y="8" width="1.6" height="1" fill="#fa9a3a"/>
<path d="M102.8 5h6.4v8.2h-6.4z" fill="#8a8a8a"/><path d="M103.8 6.3h4.4M103.8 8h4.4M103.8 9.7h2.4" stroke="#e6e6e6" stroke-width="0.8"/><circle cx="108.2" cy="11.6" r="1.9" fill="#fa9a3a"/><path d="M102.3 5v8.4" stroke="#444" stroke-width="1"/>
<path d="M112.6 8.6h3l-1.5 1.8z" fill="#444"/>
<path d="M119.6 7.4h3" stroke="#444" stroke-width="0.9"/><path d="M119.6 8.8h3l-1.5 1.7z" fill="#444"/>
<path d="M795.4 9.500h3.400" stroke="#444" stroke-width="1.1"/><rect x="815.400" y="6" width="4.600" height="4.400" fill="none" stroke="#555" stroke-width="0.8"/><path d="M815 5.800h5.400" stroke="#555" stroke-width="0.9"/><path d="M835.400 6.200l4.400 4.200M839.800 6.200l-4.400 4.200" stroke="#444" stroke-width="0.8"/>
<rect x="754.3" y="22" width="8.6" height="7.8" fill="#2d2d2d"/><rect x="755.5" y="23" width="2.6" height="1.8" fill="#e6e6e6"/><rect x="759" y="23" width="2.6" height="1.8" fill="#e6e6e6"/><rect x="757.2" y="26" width="2.8" height="2.6" fill="#e6e6e6"/>
<path d="M774 22.8l-4.4 3 4.4 3" stroke="#2d2d2d" stroke-width="0.9" fill="none"/><circle cx="774.3" cy="22.8" r="1.2" fill="#2d2d2d"/><circle cx="769.4" cy="25.8" r="1.2" fill="#2d2d2d"/><circle cx="774.3" cy="28.8" r="1.2" fill="#2d2d2d"/>
<circle cx="809.8" cy="25.8" r="2.6" fill="none" stroke="#2d2d2d" stroke-width="2"/><path d="M809.8 21.6v8.4M805.6 25.8h8.4M806.8 22.8l6 6M812.8 22.8l-6 6" stroke="#2d2d2d" stroke-width="1.5"/><circle cx="809.8" cy="25.8" r="1.3" fill="#e6e6e6"/>
<path d="M816.6 25.2h2.8l-1.4 1.6z" fill="#333"/>
<path d="M825.800 22.200l2.400 2.400 2.400-2.400" stroke="#f59a23" stroke-width="1.800" fill="none"/><path d="M824.400 23.500l2.400 2.400-2.400 2.400" stroke="#2e9be0" stroke-width="1.800" fill="none"/><path d="M832 23.500l-2.400 2.400 2.400 2.400" stroke="#7ab82e" stroke-width="1.800" fill="none"/><path d="M825.800 29.600l2.400-2.400 2.400 2.400" stroke="#ee4a78" stroke-width="1.800" fill="none"/>
<path d="M838.600 27.600h5.200a1.300 1.300 0 0 0 0-2.400l-2.600-2.200-2.600 2.200a1.300 1.300 0 0 0 0 2.400z" stroke="#666" stroke-width="0.8" fill="none"/>
<g stroke="#a9a9a9" stroke-width="1.1" fill="none"><circle cx="9.8" cy="45.1" r="1.4"/><circle cx="12.6" cy="49.500" r="1.4"/><path d="M11 45.600l5.600 .6M12.800 48.200l3.800-5"/></g>
<path d="M23.200 48.400l3.200-3.200 2.400 2.400-3.200 3.200z" fill="#b2b2b2"/><path d="M27 45.800l3.800-3.600" stroke="#9c9c9c" stroke-width="1.500"/>
<path d="M8.200 59.600h3.400l2 2v4.400h-5.400z" fill="#fff" stroke="#bdbdbd" stroke-width="0.8"/><path d="M11.600 62.400h3.600l2.200 2.200v3.600h-5.800z" fill="#fff" stroke="#bdbdbd" stroke-width="0.8"/>
<rect x="21.2" y="60.6" width="6.2" height="5.600" fill="#333"/><rect x="22.800" y="60.200" width="3" height="1.400" fill="#f3f3f3"/><path d="M24.200 63.600h3.800l2 1.800v2.600h-5.800z" fill="#fff" stroke="#fa9a3a" stroke-width="1.2"/>
<path d="M32.600 63.400h3l-1.500 1.700z" fill="#333"/>
<path d="M106.8 46h2.8l-1.4 1.6z" fill="#444"/><path d="M133 46h2.8l-1.4 1.6z" fill="#444"/>
<path d="M148.2 43.6l1.3-1.5 1.3 1.5z" fill="#333"/>
<path d="M161 42.2l1.3 1.5 1.3-1.5z" fill="#333"/>
<path d="M168.2 43.4h8M168.2 45h6.6M168.2 46.6h8M168.2 48.2h6.6M168.2 49.8h8" stroke="#555" stroke-width="1.1"/><path d="M178.6 46h2.8l-1.4 1.6z" fill="#444"/>
<path d="M186.4 49.6a4.2 4.8 0 0 1 8.4 0" stroke="#b9b9b9" stroke-width="1" fill="none"/><path d="M197 46h2.6l-1.3 1.5z" fill="#c0c0c0"/>
<path d="M128.6 60.4v8" stroke="#333" stroke-width="1"/><path d="M127 61.8l1.6-2 1.6 2zM127 67l1.6 2 1.6-2z" fill="#333"/><path d="M131.4 61.6h4.8M131.4 63.4h4.8M131.4 65.2h4.8M131.4 67h4.8" stroke="#8a8a8a" stroke-width="1"/><path d="M138.4 63.6h2.8l-1.4 1.6z" fill="#444"/>
<path d="M148.4 61.4h5.8M148.4 64.4h5.8M148.4 67.4h5.8" stroke="#444" stroke-width="1.1"/><rect x="145.4" y="60.7" width="1.5" height="1.5" fill="#fa9a3a"/><rect x="145.4" y="63.7" width="1.5" height="1.5" fill="#fa9a3a"/><rect x="145.4" y="66.7" width="1.5" height="1.5" fill="#fa9a3a"/><path d="M156.6 63.6h2.8l-1.4 1.6z" fill="#444"/>
<rect x="164.6" y="60" width="8.2" height="7" fill="#f9a94d"/><path d="M165.8 62h2.4M169.2 62h2.4M165.8 64h2.4M169.2 64h2.4M165.8 65.8h5.8" stroke="#fde0bd" stroke-width="0.8"/><rect x="164.6" y="67.6" width="8.2" height="1.4" fill="#d9d9d9"/><path d="M175.4 63.6h2.8l-1.4 1.6z" fill="#444"/>
<rect x="184" y="67.8" width="8" height="1.4" fill="#d6d6d6"/><path d="M194.6 63.6h2.8l-1.4 1.6z" fill="#444"/>
<path d="M197.6 81.0v-2.6h2.6" stroke="#555" stroke-width="0.8" fill="none"/><rect x="199.2" y="80.0" width="2.2" height="2.2" fill="#555"/>
<path d="M215.4 38.6v14.2l3.5-3.1 2.1 4.6 2.6-1.2-2.1-4.5 4.6-.4z" fill="#3a3a3a"/>
<path d="M219 69.4h2.8l-1.4 1.6z" fill="#333"/>
<rect x="234.4" y="38" width="16.6" height="17" fill="none" stroke="#333" stroke-width="1" stroke-dasharray="1 1"/><rect x="236" y="39.4" width="13.4" height="14" rx="3.6" fill="#fa9a3a"/>
<path d="M241.4 69.4h2.8l-1.4 1.6z" fill="#333"/>
<path d="M264.4 39.6h7.6v12.7h5" stroke="#3a3a3a" stroke-width="1.1" fill="none"/><circle cx="264.4" cy="39.6" r="2.1" fill="#fa9a3a"/><circle cx="277" cy="52.3" r="2.1" fill="#fa9a3a"/>
<path d="M269.6 69.4h2.8l-1.4 1.6z" fill="#333"/>
<path d="M297 46.4l8.4-8" stroke="#555" stroke-width="0.9"/>
<path d="M313.2 39.2a3.3 3.3 0 1 1 0 6.6" stroke="#fa9a3a" stroke-width="1.5" fill="none"/><circle cx="313.4" cy="39" r="1.3" fill="#fa9a3a"/><circle cx="313.4" cy="46" r="1.3" fill="#fa9a3a"/>
<rect x="297" y="52" width="9" height="7.4" fill="#fa9a3a"/>
<path d="M310.4 51.6l8 8M318.4 51.6l-8 8" stroke="#444" stroke-width="0.9"/><circle cx="314.4" cy="55.6" r="1.5" fill="#fa9a3a"/>
<ellipse cx="301.5" cy="68.8" rx="4.6" ry="3.6" fill="#fa9a3a"/>
<path d="M312.6 64.6v6.6h6M311 66.2h6.2v6.4" stroke="#444" stroke-width="0.9" fill="none"/><path d="M311.4 72l6.6-6.8" stroke="#444" stroke-width="0.7"/>
<rect x="331" y="38.6" width="5" height="5" fill="#8a8a8a"/><rect x="333.4" y="40.6" width="5.8" height="5.8" fill="#c9c9c9" stroke="#a8a8a8" stroke-width="0.6"/><path d="M339.6 44v2.9h-3" stroke="#8a8a8a" stroke-width="0.9" fill="none"/>
<path d="M385.2 42.2h2.4l-1.2 1.4z" fill="#a3a3a3"/>
<rect x="331" y="52" width="5" height="5" fill="#8a8a8a"/><rect x="334" y="54.6" width="5.6" height="5.6" fill="#9a9a9a"/><rect x="333" y="54" width="3" height="3" fill="#d0d0d0"/>
<path d="M382.8 55.6h2.4l-1.2 1.4z" fill="#a3a3a3"/>
<path d="M334.8 65.4v8.2h-3.8z" fill="#c4c4c4"/><path d="M336 65.4v8.2h3.8z" fill="#9a9a9a"/>
<path d="M381.8 69h2.4l-1.2 1.4z" fill="#a3a3a3"/>
<rect x="393" y="38.4" width="8.4" height="8.4" fill="none" stroke="#8a8a8a" stroke-width="0.8" stroke-dasharray="1.6 1.4"/><path d="M395 42l2-2h3v3.4l-2 2h-3z" fill="#c0c0c0"/>
<path d="M423.4 42.2h2.4l-1.2 1.4z" fill="#a3a3a3"/>
<path d="M393.6 51.4v9.4" stroke="#8a8a8a" stroke-width="1"/><rect x="395" y="52.6" width="4" height="2.2" fill="#8a8a8a"/><rect x="395" y="57" width="6.2" height="2.2" fill="#8a8a8a"/>
<path d="M420.2 55.6h2.4l-1.2 1.4z" fill="#a3a3a3"/>
<path d="M392.8 67h8.6M392.8 71.4h8.6M395 65v8.8M399 65v8.8" stroke="#8a8a8a" stroke-width="0.9"/>
<path d="M434 69h2.4l-1.2 1.4z" fill="#a3a3a3"/>
<rect x="440.6" y="38.2" width="3.4" height="3" fill="#555"/><rect x="443.6" y="41.6" width="5.6" height="4.4" fill="none" stroke="#b5b5b5" stroke-width="0.9"/>
<path d="M464 42.2h2.4l-1.2 1.4z" fill="#a3a3a3"/>
<rect x="440.6" y="52.2" width="8.8" height="7" rx="1" fill="#fff" stroke="#555" stroke-width="0.9"/><rect x="443" y="54.6" width="4" height="2.2" fill="#fa9a3a"/>
<rect x="441.6" y="69" width="6.4" height="4.8" fill="#c4c4c4"/><path d="M443 69v-1.8a1.8 1.8 0 0 1 3.6 0v1.8" stroke="#c4c4c4" stroke-width="0.9" fill="none"/>
<path d="M474 69h2.4l-1.2 1.4z" fill="#a3a3a3"/>
<path d="M473.6 81.0v-2.6h2.6" stroke="#555" stroke-width="0.8" fill="none"/><rect x="475.20000000000005" y="80.0" width="2.2" height="2.2" fill="#555"/>
<path d="M686 42l1.4-1.6 1.4 1.6zM686 50.4l1.4 1.6 1.4-1.6z" fill="#444"/><path d="M686 57.6h2.8" stroke="#444" stroke-width="0.7"/><path d="M686 58.6l1.4 1.6 1.4-1.6z" fill="#444"/>
<path d="M702.4 43.6l3.2-3.4 3.4 2.8-3.2 3.2z" fill="#f3f3f3" stroke="#999" stroke-width="1"/><path d="M708.6 41.4c1.4 0 2 1 1.800 2.600" fill="none" stroke="#999" stroke-width="0.9"/><path d="M701.4 47.3h8.600" stroke="#999" stroke-width="1.4"/>
<path d="M722.4 42h2.4l-1.2 1.4z" fill="#a3a3a3"/>
<path d="M702 57.600l1.600-2.200-1.400-2.200c1-1.600 4.400-1.800 5-.2l-2.600 4.600z" fill="#f3f3f3" stroke="#999" stroke-width="0.9"/><path d="M709.600 52l-3 4.800" stroke="#999" stroke-width="1.600"/><path d="M701.400 60.400h8.600" stroke="#999" stroke-width="1.400"/>
<path d="M725.8 55.8h2.4l-1.2 1.4z" fill="#a3a3a3"/>
<rect x="701.4" y="65.2" width="8.6" height="8.6" fill="#cfcfcf"/>
<path d="M736.2 69.2h2.4l-1.2 1.4z" fill="#a3a3a3"/>
<path d="M737.4 81.0v-2.6h2.6" stroke="#b0b0b0" stroke-width="0.8" fill="none"/><rect x="739.0" y="80.0" width="2.2" height="2.2" fill="#b0b0b0"/>
<circle cx="754" cy="41.2" r="2.7" fill="none" stroke="#fa9a3a" stroke-width="1.2"/><path d="M756 43.4l3.4 3.4" stroke="#fa9a3a" stroke-width="1.5"/>
<path d="M752 52h4l2 2v6.6h-6z" fill="#fff" stroke="#444" stroke-width="0.9"/><path d="M753.6 58.6l1.4 1.2 2.6-3" stroke="#fa9a3a" stroke-width="1.1" fill="none"/>
<path d="M751.4 67.2v5M753 69.7h2.4M754.2 68.5v2.4" stroke="#aaa" stroke-width="0.8"/><path d="M756.4 72.2l1.6-4.4 1.6 4.4z" fill="#aaa"/>
<path d="M805.6 69.2h2.4l-1.2 1.4z" fill="#a3a3a3"/></svg>
<!-- text -->
<div class="t" style="left:237.6px;top:339.5px;font-size:7.3px;line-height:9.3px;height:9.3px;transform:scaleX(0.964);color:#4a4a4a;">R0</div>
<div class="t" style="left:265.2px;top:294.1px;font-size:7.3px;line-height:9.3px;height:9.3px;transform:scaleX(0.954);color:#4a4a4a;">C1</div>
<div class="t" style="left:288.2px;top:299.8px;font-size:7.3px;line-height:9.3px;height:9.3px;transform:scaleX(0.889);color:#4a4a4a;">R2</div>
<div class="t" style="left:278.4px;top:360.7px;font-size:7.3px;line-height:9.3px;height:9.3px;transform:scaleX(0.922);color:#4a4a4a;">C2</div>
<div class="t" style="left:237.6px;top:375.2px;font-size:7.3px;line-height:9.3px;height:9.3px;transform:scaleX(0.936);color:#4a4a4a;">L1</div>
<div class="t" style="left:265.9px;top:388.9px;font-size:7.3px;line-height:9.3px;height:9.3px;transform:scaleX(0.932);color:#4a4a4a;">R1</div>
<div class="t" style="left:323.0px;top:385.4px;font-size:7.3px;line-height:9.3px;height:9.3px;transform:scaleX(0.943);color:#4a4a4a;">C3</div>
<div class="t" style="left:328.0px;top:334.2px;font-size:7.3px;line-height:9.3px;height:9.3px;transform:scaleX(0.985);color:#4a4a4a;">L2</div>
<div class="t" style="left:355.3px;top:301.9px;font-size:7.3px;line-height:9.3px;height:9.3px;transform:scaleX(0.932);color:#4a4a4a;">R4</div>
<div class="t" style="left:328.2px;top:285.9px;font-size:7.3px;line-height:9.3px;height:9.3px;transform:scaleX(0.889);color:#4a4a4a;">C4</div>
<div class="t" style="left:374.4px;top:273.0px;font-size:7.3px;line-height:9.3px;height:9.3px;transform:scaleX(0.874);color:#4a4a4a;">TV1</div>
<div class="t" style="left:371.5px;top:362.4px;font-size:7.3px;line-height:9.3px;height:9.3px;transform:scaleX(0.934);color:#4a4a4a;">TV2</div>
<div class="t" style="left:376.0px;top:295.2px;font-size:7.3px;line-height:9.3px;height:9.3px;transform:scaleX(0.985);color:#4a4a4a;">L3</div>
<div class="t" style="left:338.4px;top:231.2px;font-size:7.3px;line-height:9.3px;height:9.3px;transform:scaleX(0.922);color:#4a4a4a;">R3</div>
<div class="t" style="left:377.2px;top:224.0px;font-size:7.3px;line-height:9.3px;height:9.3px;transform:scaleX(0.932);color:#4a4a4a;">R5</div>
<div class="t" style="left:400.0px;top:224.0px;font-size:7.3px;line-height:9.3px;height:9.3px;transform:scaleX(0.964);color:#4a4a4a;">R6</div>
<div class="t" style="left:416.5px;top:253.5px;font-size:7.3px;line-height:9.3px;height:9.3px;transform:scaleX(0.879);color:#4a4a4a;">C6</div>
<div class="t" style="left:435.8px;top:253.5px;font-size:7.3px;line-height:9.3px;height:9.3px;transform:scaleX(0.954);color:#4a4a4a;">R8</div>
<div class="t" style="left:424.7px;top:331.9px;font-size:7.3px;line-height:9.3px;height:9.3px;transform:scaleX(0.954);color:#4a4a4a;">C7</div>
<div class="t" style="left:420.5px;top:368.8px;font-size:7.3px;line-height:9.3px;height:9.3px;transform:scaleX(0.911);color:#4a4a4a;">R7</div>
<div class="t" style="left:471.8px;top:356.6px;font-size:7.3px;line-height:9.3px;height:9.3px;transform:scaleX(0.954);color:#4a4a4a;">C8</div>
<div class="t" style="left:477.2px;top:257.0px;font-size:7.3px;line-height:9.3px;height:9.3px;transform:scaleX(0.932);color:#4a4a4a;">C9</div>
<div class="t" style="left:500.7px;top:264.8px;font-size:7.3px;line-height:9.3px;height:9.3px;transform:scaleX(1.001);color:#4a4a4a;">R10</div>
<div class="t" style="left:485.9px;top:192.9px;font-size:7.3px;line-height:9.3px;height:9.3px;transform:scaleX(0.868);color:#4a4a4a;">R9</div>
<div class="t" style="left:470.1px;top:305.2px;font-size:7.3px;line-height:9.3px;height:9.3px;transform:scaleX(0.874);color:#4a4a4a;">L5</div>
<div class="t" style="left:521.2px;top:186.5px;font-size:7.3px;line-height:9.3px;height:9.3px;transform:scaleX(0.949);color:#4a4a4a;">R11</div>
<div class="t" style="left:548.2px;top:186.5px;font-size:7.3px;line-height:9.3px;height:9.3px;transform:scaleX(0.971);color:#4a4a4a;">R12</div>
<div class="t" style="left:522.4px;top:234.3px;font-size:7.3px;line-height:9.3px;height:9.3px;transform:scaleX(0.911);color:#4a4a4a;">TV3</div>
<div class="t" style="left:524.0px;top:278.9px;font-size:7.3px;line-height:9.3px;height:9.3px;transform:scaleX(0.961);color:#4a4a4a;">L6</div>
<div class="t" style="left:517.6px;top:335.9px;font-size:7.3px;line-height:9.3px;height:9.3px;transform:scaleX(0.919);color:#4a4a4a;">TV4</div>
<div class="t" style="left:551.6px;top:331.9px;font-size:7.3px;line-height:9.3px;height:9.3px;transform:scaleX(0.838);color:#4a4a4a;">L7</div>
<div class="t" style="left:566.8px;top:367.7px;font-size:7.3px;line-height:9.3px;height:9.3px;transform:scaleX(0.993);color:#4a4a4a;">R13</div>
<div class="t" style="left:575.2px;top:389.6px;font-size:7.3px;line-height:9.3px;height:9.3px;transform:scaleX(0.986);color:#4a4a4a;">C10</div>
<div class="t" style="left:567.0px;top:243.2px;font-size:7.3px;line-height:9.3px;height:9.3px;transform:scaleX(0.957);color:#4a4a4a;">C11</div>
<div class="t" style="left:586.6px;top:247.7px;font-size:7.3px;line-height:9.3px;height:9.3px;transform:scaleX(0.948);color:#4a4a4a;">R14</div>
<div class="t" style="left:580.3px;top:315.7px;font-size:7.3px;line-height:9.3px;height:9.3px;transform:scaleX(0.948);color:#4a4a4a;">C12</div>
<div class="t" style="left:625.4px;top:334.4px;font-size:7.3px;line-height:9.3px;height:9.3px;transform:scaleX(0.911);color:#4a4a4a;">C13</div>
<div class="t" style="left:629.4px;top:286.0px;font-size:7.3px;line-height:9.3px;height:9.3px;transform:scaleX(0.936);color:#4a4a4a;">L8</div>
<div class="t" style="left:635.3px;top:240.7px;font-size:7.3px;line-height:9.3px;height:9.3px;transform:scaleX(0.963);color:#4a4a4a;">C14</div>
<div class="t" style="left:660.7px;top:255.2px;font-size:7.3px;line-height:9.3px;height:9.3px;transform:scaleX(0.948);color:#4a4a4a;">R16</div>
<div class="t" style="left:644.7px;top:186.2px;font-size:7.3px;line-height:9.3px;height:9.3px;transform:scaleX(0.963);color:#4a4a4a;">R15</div>
<div class="t" style="left:681.9px;top:175.9px;font-size:7.3px;line-height:9.3px;height:9.3px;transform:scaleX(0.948);color:#4a4a4a;">R17</div>
<div class="t" style="left:708.7px;top:175.9px;font-size:7.3px;line-height:9.3px;height:9.3px;transform:scaleX(0.963);color:#4a4a4a;">R18</div>
<div class="t" style="left:678.0px;top:224.2px;font-size:7.3px;line-height:9.3px;height:9.3px;transform:scaleX(0.941);color:#4a4a4a;">TV5</div>
<div class="t" style="left:703.5px;top:243.3px;font-size:7.3px;line-height:9.3px;height:9.3px;transform:scaleX(0.874);color:#4a4a4a;">L9</div>
<div class="t" style="left:674.7px;top:314.4px;font-size:7.3px;line-height:9.3px;height:9.3px;transform:scaleX(0.919);color:#4a4a4a;">TV6</div>
<div class="t" style="left:714.6px;top:294.4px;font-size:7.3px;line-height:9.3px;height:9.3px;transform:scaleX(0.926);color:#4a4a4a;">C15</div>
<div class="t" style="left:745.9px;top:308.4px;font-size:7.3px;line-height:9.3px;height:9.3px;transform:scaleX(0.963);color:#4a4a4a;">C16</div>
<div class="t" style="left:684.4px;top:418.2px;font-size:7.3px;line-height:9.3px;height:9.3px;transform:scaleX(1.018);color:#4a4a4a;">In</div>
<div class="t" style="left:681.9px;top:430.2px;font-size:7.3px;line-height:9.3px;height:9.3px;transform:scaleX(1.037);color:#4a4a4a;">Out</div>
<div class="t" style="left:674.0px;top:441.8px;font-size:7.3px;line-height:9.3px;height:9.3px;transform:scaleX(1.022);color:#4a4a4a;">AC+20B</div>
<div class="t" style="left:675.3px;top:453.0px;font-size:7.3px;line-height:9.3px;height:9.3px;transform:scaleX(0.978);color:#4a4a4a;">General</div>
<div class="t" style="left:4.7px;top:91.0px;font-size:9.2px;line-height:11.2px;height:11.2px;transform:scaleX(0.887);color:#505050;">Libraries</div>
<div class="t" style="left:13.6px;top:119.6px;font-size:8px;line-height:10px;height:10px;transform:scaleX(0.817);color:#222;">Transmission Path</div>
<div class="t" style="left:60.2px;top:292.6px;font-size:8.5px;line-height:10.5px;height:10.5px;transform:scaleX(0.744);color:#333;font-family:'Liberation Serif',serif;">Text</div>
<div class="t" style="left:103.5px;top:288.1px;font-size:8.5px;line-height:10.5px;height:10.5px;transform:scaleX(0.731);color:#333;font-family:'Liberation Serif',serif;">Text</div>
<div class="t" style="left:103.5px;top:298.8px;font-size:8.5px;line-height:10.5px;height:10.5px;transform:scaleX(0.731);color:#333;font-family:'Liberation Serif',serif;">Text</div>
<div class="t" style="left:106.9px;top:342.8px;font-size:6.5px;line-height:8.5px;height:8.5px;transform:scaleX(0.907);color:#333;">T</div>
<div class="t" style="left:15.8px;top:170.9px;font-size:8px;line-height:10px;height:10px;transform:scaleX(0.900);color:#333;">Wire</div>
<div class="t" style="left:47.0px;top:170.9px;font-size:8px;line-height:10px;height:10px;transform:scaleX(0.895);color:#333;">Wire (Stra...</div>
<div class="t" style="left:89.9px;top:170.9px;font-size:8px;line-height:10px;height:10px;transform:scaleX(0.907);color:#333;">multi-line ...</div>
<div class="t" style="left:4.2px;top:219.7px;font-size:8px;line-height:10px;height:10px;transform:scaleX(0.922);color:#333;">multi-line ...</div>
<div class="t" style="left:47.0px;top:219.7px;font-size:8px;line-height:10px;height:10px;transform:scaleX(0.904);color:#333;">Straight b...</div>
<div class="t" style="left:89.9px;top:219.7px;font-size:8px;line-height:10px;height:10px;transform:scaleX(0.892);color:#333;">Elbow bu...</div>
<div class="t" style="left:10.6px;top:269.1px;font-size:8px;line-height:10px;height:10px;transform:scaleX(0.869);color:#333;">Junction</div>
<div class="t" style="left:47.0px;top:269.1px;font-size:8px;line-height:10px;height:10px;transform:scaleX(0.892);color:#333;">Junction/ ...</div>
<div class="t" style="left:89.9px;top:269.1px;font-size:8px;line-height:10px;height:10px;transform:scaleX(0.910);color:#333;">Various ju...</div>
<div class="t" style="left:9.6px;top:317.9px;font-size:8px;line-height:10px;height:10px;transform:scaleX(0.906);color:#333;">Terminal</div>
<div class="t" style="left:47.3px;top:317.9px;font-size:8px;line-height:10px;height:10px;transform:scaleX(0.902);color:#333;">Terminal l...</div>
<div class="t" style="left:90.0px;top:317.9px;font-size:8px;line-height:10px;height:10px;transform:scaleX(0.905);color:#333;">Terminal ...</div>
<div class="t" style="left:3.9px;top:366.8px;font-size:8px;line-height:10px;height:10px;transform:scaleX(0.928);color:#333;">Terminal ...</div>
<div class="t" style="left:49.8px;top:366.8px;font-size:8px;line-height:10px;height:10px;transform:scaleX(0.958);color:#333;">Test point</div>
<div class="t" style="left:100.3px;top:366.8px;font-size:8px;line-height:10px;height:10px;transform:scaleX(0.889);color:#333;">Label</div>
<div class="t" style="left:3.9px;top:415.7px;font-size:8px;line-height:10px;height:10px;transform:scaleX(0.876);color:#333;">Transmiss...</div>
<div class="t" style="left:47.3px;top:415.7px;font-size:8px;line-height:10px;height:10px;transform:scaleX(0.876);color:#333;">Transmiss...</div>
<div class="t" style="left:90.0px;top:415.7px;font-size:8px;line-height:10px;height:10px;transform:scaleX(0.878);color:#333;">Transmiss...</div>
<div class="t" style="left:13.6px;top:443.0px;font-size:8px;line-height:10px;height:10px;transform:scaleX(0.808);color:#222;">Basic Electrical Symbols</div>
<div class="t" style="left:13.6px;top:457.7px;font-size:8px;line-height:10px;height:10px;transform:scaleX(0.845);color:#222;">Analog and Digital Logic</div>
<div class="t" style="left:13.6px;top:472.3px;font-size:8px;line-height:10px;height:10px;transform:scaleX(0.852);color:#222;">Integrated Circuit Components</div>
<div class="t" style="left:13.6px;top:486.8px;font-size:8px;line-height:10px;height:10px;transform:scaleX(0.833);color:#222;">Terminals and Connectors</div>
<div class="t" style="left:13.6px;top:501.4px;font-size:8px;line-height:10px;height:10px;transform:scaleX(0.827);color:#222;">Backgrounds</div>
<div class="t" style="left:8.8px;top:513.6px;font-size:8px;line-height:10px;height:10px;transform:scaleX(0.795);color:#222;">Libraries</div>
<div class="t" style="left:46.9px;top:513.6px;font-size:8px;line-height:10px;height:10px;transform:scaleX(0.787);color:#222;">File Recovery</div>
<div class="t" style="left:199.3px;top:90.0px;font-size:8px;line-height:10px;height:10px;transform:scaleX(0.843);color:#111;">Semiconductor Electron</div>
<div class="t" style="left:213.5px;top:101.1px;font-size:5.6px;line-height:7.6px;height:7.6px;transform:scaleX(0.860);color:#8a8a8a;">10</div>
<div class="t" style="left:234.8px;top:101.1px;font-size:5.6px;line-height:7.6px;height:7.6px;transform:scaleX(0.860);color:#8a8a8a;">20</div>
<div class="t" style="left:256.0px;top:101.1px;font-size:5.6px;line-height:7.6px;height:7.6px;transform:scaleX(0.860);color:#8a8a8a;">30</div>
<div class="t" style="left:277.2px;top:101.1px;font-size:5.6px;line-height:7.6px;height:7.6px;transform:scaleX(0.860);color:#8a8a8a;">40</div>
<div class="t" style="left:298.5px;top:101.1px;font-size:5.6px;line-height:7.6px;height:7.6px;transform:scaleX(0.860);color:#8a8a8a;">50</div>
<div class="t" style="left:319.8px;top:101.1px;font-size:5.6px;line-height:7.6px;height:7.6px;transform:scaleX(0.860);color:#8a8a8a;">60</div>
<div class="t" style="left:341.0px;top:101.1px;font-size:5.6px;line-height:7.6px;height:7.6px;transform:scaleX(0.860);color:#8a8a8a;">70</div>
<div class="t" style="left:362.2px;top:101.1px;font-size:5.6px;line-height:7.6px;height:7.6px;transform:scaleX(0.860);color:#8a8a8a;">80</div>
<div class="t" style="left:383.5px;top:101.1px;font-size:5.6px;line-height:7.6px;height:7.6px;transform:scaleX(0.860);color:#8a8a8a;">90</div>
<div class="t" style="left:404.8px;top:101.1px;font-size:5.6px;line-height:7.6px;height:7.6px;transform:scaleX(0.860);color:#8a8a8a;">100</div>
<div class="t" style="left:426.0px;top:101.1px;font-size:5.6px;line-height:7.6px;height:7.6px;transform:scaleX(0.860);color:#8a8a8a;">110</div>
<div class="t" style="left:447.2px;top:101.1px;font-size:5.6px;line-height:7.6px;height:7.6px;transform:scaleX(0.860);color:#8a8a8a;">120</div>
<div class="t" style="left:468.5px;top:101.1px;font-size:5.6px;line-height:7.6px;height:7.6px;transform:scaleX(0.860);color:#8a8a8a;">130</div>
<div class="t" style="left:489.8px;top:101.1px;font-size:5.6px;line-height:7.6px;height:7.6px;transform:scaleX(0.860);color:#8a8a8a;">140</div>
<div class="t" style="left:511.0px;top:101.1px;font-size:5.6px;line-height:7.6px;height:7.6px;transform:scaleX(0.860);color:#8a8a8a;">150</div>
<div class="t" style="left:532.2px;top:101.1px;font-size:5.6px;line-height:7.6px;height:7.6px;transform:scaleX(0.860);color:#8a8a8a;">160</div>
<div class="t" style="left:553.5px;top:101.1px;font-size:5.6px;line-height:7.6px;height:7.6px;transform:scaleX(0.860);color:#8a8a8a;">170</div>
<div class="t" style="left:574.8px;top:101.1px;font-size:5.6px;line-height:7.6px;height:7.6px;transform:scaleX(0.860);color:#8a8a8a;">180</div>
<div class="t" style="left:596.0px;top:101.1px;font-size:5.6px;line-height:7.6px;height:7.6px;transform:scaleX(0.860);color:#8a8a8a;">190</div>
<div class="t" style="left:617.2px;top:101.1px;font-size:5.6px;line-height:7.6px;height:7.6px;transform:scaleX(0.860);color:#8a8a8a;">200</div>
<div class="t" style="left:638.5px;top:101.1px;font-size:5.6px;line-height:7.6px;height:7.6px;transform:scaleX(0.860);color:#8a8a8a;">210</div>
<div class="t" style="left:659.8px;top:101.1px;font-size:5.6px;line-height:7.6px;height:7.6px;transform:scaleX(0.860);color:#8a8a8a;">220</div>
<div class="t" style="left:681.0px;top:101.1px;font-size:5.6px;line-height:7.6px;height:7.6px;transform:scaleX(0.860);color:#8a8a8a;">230</div>
<div class="t" style="left:702.2px;top:101.1px;font-size:5.6px;line-height:7.6px;height:7.6px;transform:scaleX(0.860);color:#8a8a8a;">240</div>
<div class="t" style="left:723.5px;top:101.1px;font-size:5.6px;line-height:7.6px;height:7.6px;transform:scaleX(0.860);color:#8a8a8a;">250</div>
<div class="t" style="left:744.8px;top:101.1px;font-size:5.6px;line-height:7.6px;height:7.6px;transform:scaleX(0.860);color:#8a8a8a;">260</div>
<div class="t" style="left:766.0px;top:101.1px;font-size:5.6px;line-height:7.6px;height:7.6px;transform:scaleX(0.860);color:#8a8a8a;">270</div>
<div class="t" style="left:787.2px;top:101.1px;font-size:5.6px;line-height:7.6px;height:7.6px;transform:scaleX(0.860);color:#8a8a8a;">280</div>
<div class="t" style="left:808.5px;top:101.1px;font-size:5.6px;line-height:7.6px;height:7.6px;transform:scaleX(0.860);color:#8a8a8a;">290</div>
<div class="t" style="left:185.5px;top:116.7px;font-size:5.6px;line-height:5px;height:5px;color:#8a8a8a;transform-origin:0 0;transform:rotate(-90deg) scaleX(0.86);">20</div>
<div class="t" style="left:185.5px;top:138.0px;font-size:5.6px;line-height:5px;height:5px;color:#8a8a8a;transform-origin:0 0;transform:rotate(-90deg) scaleX(0.86);">30</div>
<div class="t" style="left:185.5px;top:159.2px;font-size:5.6px;line-height:5px;height:5px;color:#8a8a8a;transform-origin:0 0;transform:rotate(-90deg) scaleX(0.86);">40</div>
<div class="t" style="left:185.5px;top:180.5px;font-size:5.6px;line-height:5px;height:5px;color:#8a8a8a;transform-origin:0 0;transform:rotate(-90deg) scaleX(0.86);">50</div>
<div class="t" style="left:185.5px;top:201.7px;font-size:5.6px;line-height:5px;height:5px;color:#8a8a8a;transform-origin:0 0;transform:rotate(-90deg) scaleX(0.86);">60</div>
<div class="t" style="left:185.5px;top:223.0px;font-size:5.6px;line-height:5px;height:5px;color:#8a8a8a;transform-origin:0 0;transform:rotate(-90deg) scaleX(0.86);">70</div>
<div class="t" style="left:185.5px;top:244.2px;font-size:5.6px;line-height:5px;height:5px;color:#8a8a8a;transform-origin:0 0;transform:rotate(-90deg) scaleX(0.86);">80</div>
<div class="t" style="left:185.5px;top:265.5px;font-size:5.6px;line-height:5px;height:5px;color:#8a8a8a;transform-origin:0 0;transform:rotate(-90deg) scaleX(0.86);">90</div>
<div class="t" style="left:185.5px;top:289.4px;font-size:5.6px;line-height:5px;height:5px;color:#8a8a8a;transform-origin:0 0;transform:rotate(-90deg) scaleX(0.86);">100</div>
<div class="t" style="left:185.5px;top:310.3px;font-size:5.6px;line-height:5px;height:5px;color:#8a8a8a;transform-origin:0 0;transform:rotate(-90deg) scaleX(0.86);">110</div>
<div class="t" style="left:185.5px;top:331.9px;font-size:5.6px;line-height:5px;height:5px;color:#8a8a8a;transform-origin:0 0;transform:rotate(-90deg) scaleX(0.86);">120</div>
<div class="t" style="left:185.5px;top:353.1px;font-size:5.6px;line-height:5px;height:5px;color:#8a8a8a;transform-origin:0 0;transform:rotate(-90deg) scaleX(0.86);">130</div>
<div class="t" style="left:185.5px;top:374.4px;font-size:5.6px;line-height:5px;height:5px;color:#8a8a8a;transform-origin:0 0;transform:rotate(-90deg) scaleX(0.86);">140</div>
<div class="t" style="left:185.5px;top:395.6px;font-size:5.6px;line-height:5px;height:5px;color:#8a8a8a;transform-origin:0 0;transform:rotate(-90deg) scaleX(0.86);">150</div>
<div class="t" style="left:185.5px;top:416.9px;font-size:5.6px;line-height:5px;height:5px;color:#8a8a8a;transform-origin:0 0;transform:rotate(-90deg) scaleX(0.86);">160</div>
<div class="t" style="left:185.5px;top:438.1px;font-size:5.6px;line-height:5px;height:5px;color:#8a8a8a;transform-origin:0 0;transform:rotate(-90deg) scaleX(0.86);">170</div>
<div class="t" style="left:185.5px;top:459.4px;font-size:5.6px;line-height:5px;height:5px;color:#8a8a8a;transform-origin:0 0;transform:rotate(-90deg) scaleX(0.86);">180</div>
<div class="t" style="left:185.5px;top:480.6px;font-size:5.6px;line-height:5px;height:5px;color:#8a8a8a;transform-origin:0 0;transform:rotate(-90deg) scaleX(0.86);">190</div>
<div class="t" style="left:201.2px;top:506.8px;font-size:8px;line-height:10px;height:10px;transform:scaleX(0.791);color:#222;">Page-1</div>
<div class="t" style="left:293.7px;top:506.8px;font-size:8px;line-height:10px;height:10px;transform:scaleX(0.760);color:#fa9a3a;">Page-1</div>
<div class="t" style="left:187.8px;top:517.0px;font-size:8px;line-height:10px;height:10px;transform:scaleX(0.783);color:#222;">Fill</div>
<div class="t" style="left:837.1px;top:308.4px;font-size:8.5px;line-height:10.5px;height:10.5px;transform:scaleX(0.848);color:#fa9a3a;font-weight:bold;">?</div>
<div class="t" style="left:7.8px;top:530.0px;font-size:8px;line-height:10px;height:10px;transform:scaleX(0.888);color:#fff;text-decoration:underline;">https://www.edrawsoft.com/</div>
<div class="t" style="left:99.4px;top:530.0px;font-size:8px;line-height:10px;height:10px;transform:scaleX(0.812);color:#fff;">Page 1/1</div>
<div class="t" style="left:770.5px;top:529.2px;font-size:8px;line-height:10px;height:10px;transform:scaleX(0.758);color:#e4e4e4;">100%</div>
<div class="t" style="left:408.4px;top:5.3px;font-size:8px;line-height:10px;height:10px;transform:scaleX(0.820);">Edraw Max</div>
<div class="t" style="left:7.5px;top:4.1px;font-size:6.5px;line-height:8.5px;height:8.5px;transform:scaleX(0.876);color:#fff;font-weight:bold;">E</div>
<div class="t" style="left:780.8px;top:21.1px;font-size:8.3px;line-height:10.3px;height:10.3px;transform:scaleX(0.790);color:#3a3ae8;">Sign In</div>
<div class="t" style="left:11.2px;top:22.2px;font-size:8px;line-height:10px;height:10px;transform:scaleX(0.815);color:#fff;">File</div>
<div class="t" style="left:38.5px;top:22.2px;font-size:8px;line-height:10px;height:10px;transform:scaleX(0.844);">Home</div>
<div class="t" style="left:68.3px;top:22.2px;font-size:8px;line-height:10px;height:10px;transform:scaleX(0.825);">Insert</div>
<div class="t" style="left:96.0px;top:22.2px;font-size:8px;line-height:10px;height:10px;transform:scaleX(0.801);">Page Layout</div>
<div class="t" style="left:143.3px;top:22.2px;font-size:8px;line-height:10px;height:10px;transform:scaleX(0.843);">View</div>
<div class="t" style="left:168.5px;top:22.2px;font-size:8px;line-height:10px;height:10px;transform:scaleX(0.848);">Symbols</div>
<div class="t" style="left:205.2px;top:22.2px;font-size:8px;line-height:10px;height:10px;transform:scaleX(0.821);">Help</div>
<div class="t" style="left:17.5px;top:75.8px;font-size:8px;line-height:10px;height:10px;transform:scaleX(0.776);">File</div>
<div class="t" style="left:47.3px;top:41.6px;font-size:8px;line-height:10px;height:10px;transform:scaleX(0.875);">Arial</div>
<div class="t" style="left:116.0px;top:41.6px;font-size:8px;line-height:10px;height:10px;transform:scaleX(0.787);">10</div>
<div class="t" style="left:142.0px;top:41.2px;font-size:9.5px;line-height:11.5px;height:11.5px;transform:scaleX(1.010);color:#333;">A</div>
<div class="t" style="left:155.2px;top:41.9px;font-size:8.8px;line-height:10.8px;height:10.8px;transform:scaleX(0.988);color:#333;">A</div>
<div class="t" style="left:48.6px;top:59.0px;font-size:8.5px;line-height:10.5px;height:10.5px;transform:scaleX(0.847);color:#333;font-weight:bold;font-family:'Liberation Serif',serif;">B</div>
<div class="t" style="left:62.2px;top:59.0px;font-size:8.5px;line-height:10.5px;height:10.5px;transform:scaleX(1.355);color:#333;font-weight:bold;font-family:'Liberation Serif',serif;font-style:italic;">I</div>
<div class="t" style="left:75.0px;top:58.8px;font-size:8.5px;line-height:10.5px;height:10.5px;transform:scaleX(0.912);color:#333;font-family:'Liberation Serif',serif;text-decoration:underline;">U</div>
<div class="t" style="left:87.0px;top:59.8px;font-size:7.5px;line-height:9.5px;height:9.5px;transform:scaleX(0.786);color:#777;text-decoration:line-through;">abc</div>
<div class="t" style="left:101.8px;top:58.5px;font-size:9px;line-height:11px;height:11px;transform:scaleX(0.839);color:#333;font-weight:bold;">x</div>
<div class="t" style="left:106.3px;top:63.0px;font-size:4.5px;line-height:6.5px;height:6.5px;transform:scaleX(0.799);color:#333;font-weight:bold;">2</div>
<div class="t" style="left:115.3px;top:59.1px;font-size:9px;line-height:11px;height:11px;transform:scaleX(0.839);color:#333;font-weight:bold;">x</div>
<div class="t" style="left:119.8px;top:58.8px;font-size:4.5px;line-height:6.5px;height:6.5px;transform:scaleX(0.799);color:#333;font-weight:bold;">2</div>
<div class="t" style="left:184.2px;top:57.6px;font-size:10px;line-height:12px;height:12px;transform:scaleX(1.109);color:#3a3a3a;font-family:'Liberation Serif',serif;">A</div>
<div class="t" style="left:113.2px;top:75.8px;font-size:8px;line-height:10px;height:10px;transform:scaleX(0.862);">Font</div>
<div class="t" style="left:211.5px;top:55.8px;font-size:8px;line-height:10px;height:10px;transform:scaleX(0.792);">Select</div>
<div class="t" style="left:239.4px;top:40.0px;font-size:11.5px;line-height:13.5px;height:13.5px;transform:scaleX(0.795);color:#fff;font-weight:bold;">A</div>
<div class="t" style="left:237.1px;top:55.8px;font-size:8px;line-height:10px;height:10px;transform:scaleX(0.763);">Text</div>
<div class="t" style="left:255.3px;top:55.8px;font-size:8px;line-height:10px;height:10px;transform:scaleX(0.840);">Connector</div>
<div class="t" style="left:249.7px;top:75.8px;font-size:8px;line-height:10px;height:10px;transform:scaleX(0.804);">Basic Tools</div>
<div class="t" style="left:342.2px;top:37.7px;font-size:8px;line-height:10px;height:10px;transform:scaleX(0.842);color:#a3a3a3;">Bring to Front</div>
<div class="t" style="left:342.2px;top:51.1px;font-size:8px;line-height:10px;height:10px;transform:scaleX(0.794);color:#a3a3a3;">Send to Back</div>
<div class="t" style="left:342.2px;top:64.5px;font-size:8px;line-height:10px;height:10px;transform:scaleX(0.830);color:#a3a3a3;">Rotate &amp; Flip</div>
<div class="t" style="left:404.3px;top:37.7px;font-size:8px;line-height:10px;height:10px;transform:scaleX(0.810);color:#a3a3a3;">Group</div>
<div class="t" style="left:404.3px;top:51.1px;font-size:8px;line-height:10px;height:10px;transform:scaleX(0.810);color:#a3a3a3;">Align</div>
<div class="t" style="left:404.3px;top:64.5px;font-size:8px;line-height:10px;height:10px;transform:scaleX(0.864);color:#a3a3a3;">Distribute</div>
<div class="t" style="left:452.2px;top:37.7px;font-size:8px;line-height:10px;height:10px;transform:scaleX(0.694);color:#a3a3a3;">Size</div>
<div class="t" style="left:452.2px;top:51.1px;font-size:8px;line-height:10px;height:10px;transform:scaleX(0.808);color:#222;">Center</div>
<div class="t" style="left:452.2px;top:64.5px;font-size:8px;line-height:10px;height:10px;transform:scaleX(0.821);color:#a3a3a3;">Protect</div>
<div class="t" style="left:388.4px;top:75.8px;font-size:8px;line-height:10px;height:10px;transform:scaleX(0.808);">Arrange</div>
<div class="t" style="left:494.4px;top:45.5px;font-size:6.5px;line-height:8.5px;height:8.5px;transform:scaleX(0.946);color:#777;">Abc</div>
<div class="t" style="left:522.6px;top:45.5px;font-size:6.5px;line-height:8.5px;height:8.5px;transform:scaleX(0.946);color:#777;">Abc</div>
<div class="t" style="left:550.8px;top:45.5px;font-size:6.5px;line-height:8.5px;height:8.5px;transform:scaleX(0.946);color:#777;">Abc</div>
<div class="t" style="left:579.0px;top:45.5px;font-size:6.5px;line-height:8.5px;height:8.5px;transform:scaleX(0.946);color:#777;">Abc</div>
<div class="t" style="left:607.2px;top:45.5px;font-size:6.5px;line-height:8.5px;height:8.5px;transform:scaleX(0.946);color:#777;">Abc</div>
<div class="t" style="left:635.4px;top:45.5px;font-size:6.5px;line-height:8.5px;height:8.5px;transform:scaleX(0.946);color:#777;">Abc</div>
<div class="t" style="left:663.6px;top:45.5px;font-size:6.5px;line-height:8.5px;height:8.5px;transform:scaleX(0.946);color:#777;">Abc</div>
<div class="t" style="left:601.6px;top:75.8px;font-size:8px;line-height:10px;height:10px;transform:scaleX(0.780);">Styles</div>
<div class="t" style="left:712.9px;top:37.5px;font-size:8px;line-height:10px;height:10px;transform:scaleX(0.842);color:#a3a3a3;">Fill</div>
<div class="t" style="left:712.9px;top:51.7px;font-size:8px;line-height:10px;height:10px;transform:scaleX(0.800);color:#a3a3a3;">Line</div>
<div class="t" style="left:712.9px;top:64.7px;font-size:8px;line-height:10px;height:10px;transform:scaleX(0.764);color:#a3a3a3;">Shadow</div>
<div class="t" style="left:762.3px;top:37.5px;font-size:8px;line-height:10px;height:10px;transform:scaleX(0.826);color:#222;">Find &amp; Replace</div>
<div class="t" style="left:762.3px;top:51.7px;font-size:8px;line-height:10px;height:10px;transform:scaleX(0.819);color:#222;">Spelling Check</div>
<div class="t" style="left:762.3px;top:64.7px;font-size:8px;line-height:10px;height:10px;transform:scaleX(0.787);color:#a3a3a3;">Change Shape</div>
<div class="t" style="left:770.2px;top:75.8px;font-size:8px;line-height:10px;height:10px;transform:scaleX(0.838);">Editing</div>
<div class="edge" style="left:0;top:0;width:850px;height:1px;background:#858585"></div><div class="edge" style="left:0;top:0;width:1px;height:544px"></div><div class="edge" style="left:1px;top:1px;width:1px;height:524px;background:#d8d8d8"></div><div class="edge" style="left:849px;top:0;width:1px;height:544px"></div>
</div>
</body>
</html>
